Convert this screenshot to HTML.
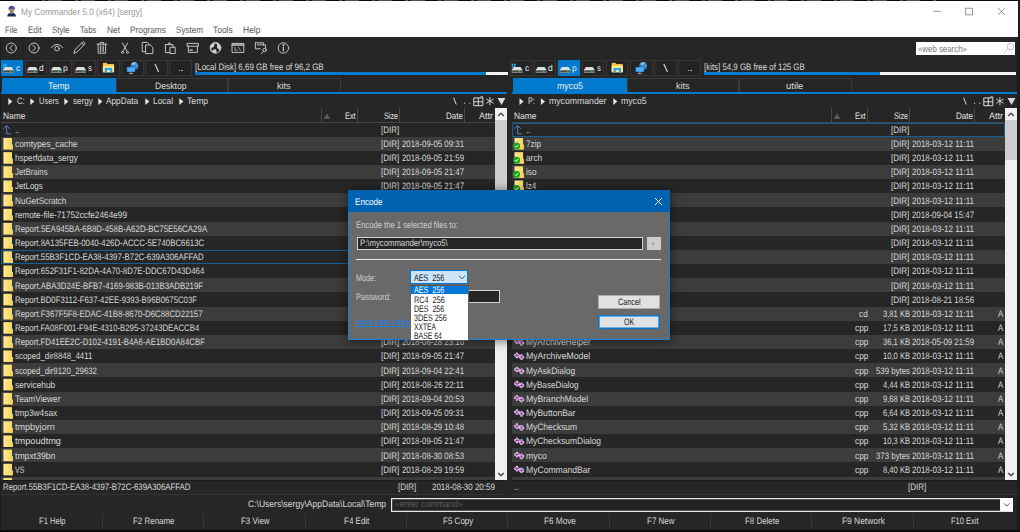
<!DOCTYPE html>
<html><head><meta charset="utf-8"><title>My Commander</title><style>
html,body{margin:0;padding:0}
body{width:1020px;height:532px;overflow:hidden;position:relative;background:#262626;font-family:"Liberation Sans",sans-serif;font-size:9.40px;color:#d8d8d8}
.a{position:absolute;display:block}
.t{position:absolute;white-space:pre;text-rendering:geometricPrecision;line-height:14px;display:block}
svg{overflow:visible}
</style></head><body>
<div class="a" style="left:0.00px;top:0.00px;width:1018.00px;height:36.80px;background:#ffffff;"></div>
<div class="a" style="left:0.00px;top:0.00px;width:1020.00px;height:1.30px;background:#0a0a0a;"></div>
<div class="a" style="left:42.00px;top:0.00px;width:896.00px;height:0.80px;background:repeating-linear-gradient(90deg,rgba(150,150,150,0.55) 0 3px,rgba(40,40,40,0.3) 3px 6px,rgba(150,150,150,0.5) 6px 20px,transparent 20px 33px);"></div>
<span class="t" style="top:5.30px;font-size:9.40px;color:#9a9a9a;left:21.00px;transform:scaleX(0.8836);transform-origin:0 50%;">My Commander 5.0 (x64) [sergy]</span>
<span class="t" style="top:23.00px;font-size:9.40px;color:#5a5a5a;left:5.30px;transform:scaleX(0.8187);transform-origin:0 50%;">File</span>
<span class="t" style="top:23.00px;font-size:9.40px;color:#5a5a5a;left:27.70px;transform:scaleX(0.8520);transform-origin:0 50%;">Edit</span>
<span class="t" style="top:23.00px;font-size:9.40px;color:#5a5a5a;left:52.00px;transform:scaleX(0.8374);transform-origin:0 50%;">Style</span>
<span class="t" style="top:23.00px;font-size:9.40px;color:#5a5a5a;left:80.00px;transform:scaleX(0.8209);transform-origin:0 50%;">Tabs</span>
<span class="t" style="top:23.00px;font-size:9.40px;color:#5a5a5a;left:106.70px;transform:scaleX(0.8887);transform-origin:0 50%;">Net</span>
<span class="t" style="top:23.00px;font-size:9.40px;color:#5a5a5a;left:129.70px;transform:scaleX(0.8836);transform-origin:0 50%;">Programs</span>
<span class="t" style="top:23.00px;font-size:9.40px;color:#5a5a5a;left:175.50px;transform:scaleX(0.8679);transform-origin:0 50%;">System</span>
<span class="t" style="top:23.00px;font-size:9.40px;color:#5a5a5a;left:213.00px;transform:scaleX(0.8977);transform-origin:0 50%;">Tools</span>
<span class="t" style="top:23.00px;font-size:9.40px;color:#5a5a5a;left:242.50px;transform:scaleX(0.9052);transform-origin:0 50%;">Help</span>
<svg class="a" style="left:6px;top:5px" width="10" height="12" viewBox="0 0 10 12"><g transform="translate(0.80 0.40)"><path d="M1.6 3.4Q2.4 0.2 5.4 0.4Q8 0.8 8.2 3.2L8 4.2L1.8 4.4Z" fill="#3d4f8f"/><ellipse cx="4.9" cy="5.4" rx="2.3" ry="2.2" fill="#a88258"/><path d="M0.4 11.2Q0.4 7.4 4.8 7.4Q9.2 7.4 9.2 11.2Z" fill="#1f2658"/><path d="M3 7.6L4.8 9.4L6.6 7.6Z" fill="#4a5a9a"/></g></svg>
<svg class="a" style="left:925px;top:2px" width="90" height="20" viewBox="0 0 90 20" fill="none" stroke="#8c8c8c" stroke-width="0.9"><g transform="translate(0.00 0.00)"><path d="M8.5 9.4H15.8"/><rect x="40.7" y="6.2" width="6.8" height="6.6"/><path d="M73.2 6.1L79.8 12.9M79.8 6.1L73.2 12.9"/></g></svg>
<div class="a" style="left:915.90px;top:41.80px;width:99.10px;height:12.90px;background:#ffffff;"></div>
<span class="t" style="top:41.90px;font-size:9.40px;color:#777;left:918.00px;transform:scaleX(0.8372);transform-origin:0 50%;">«web search»</span>
<svg class="a" style="left:1002px;top:42px" width="13" height="12" viewBox="0 0 13 12" fill="none" stroke="#c4c4c4" stroke-width="1"><g transform="translate(0.00 0.00)"><circle cx="8.4" cy="4.6" r="3.3"/><path d="M6 7L1.6 11.4"/></g></svg>
<svg class="a" style="left:0px;top:37px" width="300" height="23" viewBox="0 0 300 23" fill="none" stroke="#cacaca" stroke-width="0.95" stroke-linecap="round" stroke-linejoin="round"><g transform="translate(0.00 0.00)">
<circle cx="11.3" cy="11" r="5"/><path d="M12.5 8.2L9.8 11L12.5 13.8"/>
<circle cx="34" cy="11" r="5"/><path d="M32.9 8.2L35.6 11L32.9 13.8"/>
<path d="M51.3 10.6Q57 3.8 62.7 10.6"/><circle cx="57" cy="11.6" r="2.3"/>
<path d="M74 16L75 12.6L82.6 5.2Q83.6 4.4 84.6 5.4Q85.4 6.4 84.5 7.3L77.2 14.8Z"/><path d="M81.8 6L83.8 8"/>
<path d="M97 7.2H106.8M98.2 7.2V16.2H105.6V7.2M100.2 7.2V5.4H103.6V7.2"/><path d="M100.6 9V14.6M103.2 9V14.6" stroke="#b9a4c4" stroke-width="1.4"/>
<path d="M122.4 6L127.2 14.4M127.6 6L122.8 14.4"/><circle cx="122.5" cy="15.4" r="1.05"/><circle cx="127.5" cy="15.4" r="1.05"/>
<path d="M142.6 5.4H147.4L149.6 7.6V14.6H142.6Z"/><path d="M146 8H150.4L152.8 10.4V16.6H146Z" fill="#252526"/>
<path d="M165.4 7.6H173V10M165.4 7.6V15.6H170M168 7.4L169.4 5.4L170.8 7.4"/><path d="M170.4 10.2H175.2V16.6H170.4Z"/>
<path d="M187.4 6.4H198.4V9.2H187.4ZM188.4 9.2V15.4H197.4V9.2"/><path d="M190 13.2H192.4" stroke-width="1.3"/>
<circle cx="215.5" cy="10.8" r="5.4" fill="#d2d2d2" stroke-width="0.9"/><path d="M214.6 6.6Q216.8 6.4 217.2 8Q216.6 9.6 217.2 11.2Q219.4 11.6 219.4 13.4Q218.6 15.2 216.4 15.6Q217 13.4 215.6 12.2Q212.8 12 212.4 14Q211 13 211.4 11Q213.6 10.6 214.2 9Z" fill="#262626" stroke="none"/>
<rect x="232.4" y="6.4" width="11.4" height="9" /><path d="M232.4 8H243.8" stroke-width="1.3"/><path d="M235 10.4V13.2H237M238.6 10.4L240.4 13.2" stroke-width="0.8"/>
<path d="M255.4 5.8H263.6V8.2M255.4 5.8V11.8H260.4M257.4 7.8H265.6V12"/><circle cx="264.6" cy="13" r="1.7"/><path d="M263.4 14.4L261.2 16.8"/>
<circle cx="283.4" cy="11" r="5.2"/><path d="M283.4 10.2V14" stroke-width="1.2"/><circle cx="283.4" cy="8" r="0.6" fill="#cacaca"/>
</g></svg>
<div class="a" style="left:1.00px;top:60.00px;width:22.40px;height:15.70px;background:#007acc;"></div>
<svg class="a" style="left:2px;top:63px" width="12" height="11" viewBox="0 0 12 11"><g transform="translate(0.90 0.10)"><path d="M0 0.7H1.6V2.3H0ZM2.3 0.7H3.9V2.3H2.3ZM0 2.7H1.6V4.3H0ZM2.3 2.7H3.9V4.3H2.3Z" fill="#22b0ff"/><path d="M2 3.8H8.8L10.8 7H0Z" fill="#dedede"/><rect x="0" y="7" width="10.8" height="3" rx="0.6" fill="#8c8c8c"/><rect x="0.6" y="7.6" width="9.6" height="1.5" fill="#474747"/><rect x="7.2" y="7.5" width="1.5" height="1.6" fill="#30c030"/></g></svg>
<span class="t" style="top:60.90px;font-size:8.70px;color:#ececec;left:15.90px;transform:scaleX(0.9655);transform-origin:0 50%;">c</span>
<div class="a" style="left:25.07px;top:60.00px;width:22.40px;height:15.70px;background:#232324;box-shadow:inset 0 0 0 1px #353535;"></div>
<svg class="a" style="left:26px;top:63px" width="12" height="11" viewBox="0 0 12 11"><g transform="translate(0.97 0.10)"><path d="M2 3.8H8.8L10.8 7H0Z" fill="#dedede"/><rect x="0" y="7" width="10.8" height="3" rx="0.6" fill="#8c8c8c"/><rect x="0.6" y="7.6" width="9.6" height="1.5" fill="#474747"/><rect x="7.2" y="7.5" width="1.5" height="1.6" fill="#30c030"/></g></svg>
<span class="t" style="top:60.90px;font-size:8.70px;color:#ececec;left:38.97px;transform:scaleX(0.9714);transform-origin:0 50%;">d</span>
<div class="a" style="left:49.14px;top:60.00px;width:22.40px;height:15.70px;background:#232324;box-shadow:inset 0 0 0 1px #353535;"></div>
<svg class="a" style="left:51px;top:63px" width="12" height="11" viewBox="0 0 12 11"><g transform="translate(0.04 0.10)"><path d="M2 3.8H8.8L10.8 7H0Z" fill="#dedede"/><rect x="0" y="7" width="10.8" height="3" rx="0.6" fill="#8c8c8c"/><rect x="0.6" y="7.6" width="9.6" height="1.5" fill="#474747"/><rect x="7.2" y="7.5" width="1.5" height="1.6" fill="#30c030"/></g></svg>
<span class="t" style="top:60.90px;font-size:8.70px;color:#ececec;left:63.34px;transform:scaleX(0.9714);transform-origin:0 50%;">p</span>
<div class="a" style="left:73.21px;top:60.00px;width:22.40px;height:15.70px;background:#232324;box-shadow:inset 0 0 0 1px #353535;"></div>
<svg class="a" style="left:75px;top:63px" width="12" height="11" viewBox="0 0 12 11"><g transform="translate(0.11 0.10)"><path d="M2 3.8H8.8L10.8 7H0Z" fill="#dedede"/><rect x="0" y="7" width="10.8" height="3" rx="0.6" fill="#8c8c8c"/><rect x="0.6" y="7.6" width="9.6" height="1.5" fill="#474747"/><rect x="7.2" y="7.5" width="1.5" height="1.6" fill="#30c030"/></g></svg>
<span class="t" style="top:60.90px;font-size:8.70px;color:#ececec;left:87.71px;transform:scaleX(0.8966);transform-origin:0 50%;">s</span>
<div class="a" style="left:97.28px;top:60.00px;width:22.40px;height:15.70px;background:#232324;box-shadow:inset 0 0 0 1px #353535;"></div>
<div class="a" style="left:121.35px;top:60.00px;width:22.40px;height:15.70px;background:#232324;box-shadow:inset 0 0 0 1px #353535;"></div>
<div class="a" style="left:145.42px;top:60.00px;width:22.40px;height:15.70px;background:#232324;box-shadow:inset 0 0 0 1px #353535;"></div>
<div class="a" style="left:169.49px;top:60.00px;width:22.40px;height:15.70px;background:#232324;box-shadow:inset 0 0 0 1px #353535;"></div>
<svg class="a" style="left:102px;top:62px" width="13" height="11" viewBox="0 0 13 11"><g transform="translate(0.48 0.60)"><path d="M0.4 1Q0.4 0.2 1.2 0.2H4L5.2 1.5H10.8Q11.6 1.5 11.6 2.3V9.6H0.4Z" fill="#f1c040"/><path d="M0.4 2.9H11.6V9.7H0.4Z" fill="#ffe48a"/><path d="M2.3 10.4V5.4H9.7V10.4H7.7V7.4H4.5V10.4Z" fill="#27a3f3"/></g></svg>
<svg class="a" style="left:125px;top:61px" width="13" height="13" viewBox="0 0 13 13"><g transform="translate(0.95 0.60)"><circle cx="8.5" cy="4.2" r="3.9" fill="#2f82c4"/><path d="M5.6 2.4Q7.6 -0.2 10.6 1Q8.6 1.8 8.2 3.6Q6.8 3.4 5.6 2.4Z" fill="#a9d0ee"/><path d="M9.6 3.2Q11.4 2.8 12 4.4Q11 5 9.8 4.6Z" fill="#6fb0e2"/><rect x="0.9" y="5.5" width="8.3" height="4.9" fill="#2f90e4"/><rect x="1.6" y="6.1" width="6.9" height="3.5" fill="#56aef2"/><path d="M5 10.4V11.8M3 12H7" stroke="#a8b4bc" stroke-width="0.9"/></g></svg>
<svg class="a" style="left:154px;top:63px" width="6" height="9" viewBox="0 0 6 9"><g transform="translate(0.02 0.60)"><path d="M1 0.4L4.6 8.4" stroke="#e0e0e0" stroke-width="1.1"/></g></svg>
<div class="a" style="left:178.99px;top:69.70px;width:1.50px;height:1.10px;background:#b4b4b4;"></div>
<div class="a" style="left:181.49px;top:69.70px;width:1.50px;height:1.10px;background:#b4b4b4;"></div>
<span class="t" style="top:59.80px;font-size:9.40px;left:195.00px;transform:scaleX(0.8484);transform-origin:0 50%;">[Local Disk] 6,69 GB free of 96,2 GB</span>
<div class="a" style="left:195.00px;top:71.90px;width:290.50px;height:2.90px;background:#007acc;"></div>
<div class="a" style="left:485.50px;top:71.90px;width:22.10px;height:2.90px;background:#f2f2f2;"></div>
<div class="a" style="left:509.80px;top:60.00px;width:22.40px;height:15.70px;background:#232324;box-shadow:inset 0 0 0 1px #353535;"></div>
<svg class="a" style="left:511px;top:63px" width="12" height="11" viewBox="0 0 12 11"><g transform="translate(0.70 0.10)"><path d="M0 0.7H1.6V2.3H0ZM2.3 0.7H3.9V2.3H2.3ZM0 2.7H1.6V4.3H0ZM2.3 2.7H3.9V4.3H2.3Z" fill="#22b0ff"/><path d="M2 3.8H8.8L10.8 7H0Z" fill="#dedede"/><rect x="0" y="7" width="10.8" height="3" rx="0.6" fill="#8c8c8c"/><rect x="0.6" y="7.6" width="9.6" height="1.5" fill="#474747"/><rect x="7.2" y="7.5" width="1.5" height="1.6" fill="#30c030"/></g></svg>
<span class="t" style="top:60.90px;font-size:8.70px;color:#ececec;left:524.70px;transform:scaleX(0.9655);transform-origin:0 50%;">c</span>
<div class="a" style="left:533.87px;top:60.00px;width:22.40px;height:15.70px;background:#232324;box-shadow:inset 0 0 0 1px #353535;"></div>
<svg class="a" style="left:535px;top:63px" width="12" height="11" viewBox="0 0 12 11"><g transform="translate(0.77 0.10)"><path d="M2 3.8H8.8L10.8 7H0Z" fill="#dedede"/><rect x="0" y="7" width="10.8" height="3" rx="0.6" fill="#8c8c8c"/><rect x="0.6" y="7.6" width="9.6" height="1.5" fill="#474747"/><rect x="7.2" y="7.5" width="1.5" height="1.6" fill="#30c030"/></g></svg>
<span class="t" style="top:60.90px;font-size:8.70px;color:#ececec;left:547.77px;transform:scaleX(0.9714);transform-origin:0 50%;">d</span>
<div class="a" style="left:557.94px;top:60.00px;width:22.40px;height:15.70px;background:#007acc;"></div>
<svg class="a" style="left:559px;top:63px" width="12" height="11" viewBox="0 0 12 11"><g transform="translate(0.84 0.10)"><path d="M2 3.8H8.8L10.8 7H0Z" fill="#dedede"/><rect x="0" y="7" width="10.8" height="3" rx="0.6" fill="#8c8c8c"/><rect x="0.6" y="7.6" width="9.6" height="1.5" fill="#474747"/><rect x="7.2" y="7.5" width="1.5" height="1.6" fill="#30c030"/></g></svg>
<span class="t" style="top:60.90px;font-size:8.70px;color:#ececec;left:572.14px;transform:scaleX(0.9714);transform-origin:0 50%;">p</span>
<div class="a" style="left:582.01px;top:60.00px;width:22.40px;height:15.70px;background:#232324;box-shadow:inset 0 0 0 1px #353535;"></div>
<svg class="a" style="left:583px;top:63px" width="12" height="11" viewBox="0 0 12 11"><g transform="translate(0.91 0.10)"><path d="M2 3.8H8.8L10.8 7H0Z" fill="#dedede"/><rect x="0" y="7" width="10.8" height="3" rx="0.6" fill="#8c8c8c"/><rect x="0.6" y="7.6" width="9.6" height="1.5" fill="#474747"/><rect x="7.2" y="7.5" width="1.5" height="1.6" fill="#30c030"/></g></svg>
<span class="t" style="top:60.90px;font-size:8.70px;color:#ececec;left:596.51px;transform:scaleX(0.8966);transform-origin:0 50%;">s</span>
<div class="a" style="left:606.08px;top:60.00px;width:22.40px;height:15.70px;background:#232324;box-shadow:inset 0 0 0 1px #353535;"></div>
<div class="a" style="left:630.15px;top:60.00px;width:22.40px;height:15.70px;background:#232324;box-shadow:inset 0 0 0 1px #353535;"></div>
<div class="a" style="left:654.22px;top:60.00px;width:22.40px;height:15.70px;background:#232324;box-shadow:inset 0 0 0 1px #353535;"></div>
<div class="a" style="left:678.29px;top:60.00px;width:22.40px;height:15.70px;background:#232324;box-shadow:inset 0 0 0 1px #353535;"></div>
<svg class="a" style="left:611px;top:62px" width="13" height="11" viewBox="0 0 13 11"><g transform="translate(0.28 0.60)"><path d="M0.4 1Q0.4 0.2 1.2 0.2H4L5.2 1.5H10.8Q11.6 1.5 11.6 2.3V9.6H0.4Z" fill="#f1c040"/><path d="M0.4 2.9H11.6V9.7H0.4Z" fill="#ffe48a"/><path d="M2.3 10.4V5.4H9.7V10.4H7.7V7.4H4.5V10.4Z" fill="#27a3f3"/></g></svg>
<svg class="a" style="left:634px;top:61px" width="13" height="13" viewBox="0 0 13 13"><g transform="translate(0.75 0.60)"><circle cx="8.5" cy="4.2" r="3.9" fill="#2f82c4"/><path d="M5.6 2.4Q7.6 -0.2 10.6 1Q8.6 1.8 8.2 3.6Q6.8 3.4 5.6 2.4Z" fill="#a9d0ee"/><path d="M9.6 3.2Q11.4 2.8 12 4.4Q11 5 9.8 4.6Z" fill="#6fb0e2"/><rect x="0.9" y="5.5" width="8.3" height="4.9" fill="#2f90e4"/><rect x="1.6" y="6.1" width="6.9" height="3.5" fill="#56aef2"/><path d="M5 10.4V11.8M3 12H7" stroke="#a8b4bc" stroke-width="0.9"/></g></svg>
<svg class="a" style="left:662px;top:63px" width="6" height="9" viewBox="0 0 6 9"><g transform="translate(0.82 0.60)"><path d="M1 0.4L4.6 8.4" stroke="#e0e0e0" stroke-width="1.1"/></g></svg>
<div class="a" style="left:687.79px;top:69.70px;width:1.50px;height:1.10px;background:#b4b4b4;"></div>
<div class="a" style="left:690.29px;top:69.70px;width:1.50px;height:1.10px;background:#b4b4b4;"></div>
<span class="t" style="top:59.80px;font-size:9.40px;left:703.80px;transform:scaleX(0.8405);transform-origin:0 50%;">[kits] 54,9 GB free of 125 GB</span>
<div class="a" style="left:703.80px;top:71.90px;width:176.20px;height:2.90px;background:#007acc;"></div>
<div class="a" style="left:880.00px;top:71.90px;width:136.40px;height:2.90px;background:#f2f2f2;"></div>
<div class="a" style="left:1.90px;top:78.30px;width:113.70px;height:15.00px;background:#007acc;"></div>
<span class="t" style="top:79.00px;font-size:9.40px;color:#f0f0f0;left:48.25px;transform:scaleX(0.9353);transform-origin:0 50%;">Temp</span>
<div class="a" style="left:115.60px;top:78.30px;width:112.40px;height:14.60px;background:#252526;box-shadow:inset 0 0 0 1px #3a3a3a;"></div>
<span class="t" style="top:79.00px;font-size:9.40px;color:#dcdcdc;left:155.45px;transform:scaleX(0.9135);transform-origin:0 50%;">Desktop</span>
<div class="a" style="left:228.00px;top:78.30px;width:112.50px;height:14.60px;background:#252526;box-shadow:inset 0 0 0 1px #3a3a3a;"></div>
<span class="t" style="top:79.00px;font-size:9.40px;color:#dcdcdc;left:277.40px;transform:scaleX(0.9645);transform-origin:0 50%;">kits</span>
<div class="a" style="left:1.00px;top:92.40px;width:506.00px;height:1.80px;background:#007acc;"></div>
<svg class="a" style="left:8px;top:97px" width="5" height="8" viewBox="0 0 5 8"><g transform="translate(0.00 0.60)"><path d="M0.3 0.6L4.4 4L0.3 7.4Z" fill="#e6e6e6"/></g></svg>
<span class="t" style="top:94.40px;font-size:9.40px;color:#dcdcdc;left:16.50px;transform:scaleX(0.8191);transform-origin:0 50%;">C:</span>
<svg class="a" style="left:30px;top:97px" width="5" height="8" viewBox="0 0 5 8"><g transform="translate(0.00 0.60)"><path d="M0.3 0.6L4.4 4L0.3 7.4Z" fill="#e6e6e6"/></g></svg>
<span class="t" style="top:94.40px;font-size:9.40px;color:#dcdcdc;left:38.50px;transform:scaleX(0.8026);transform-origin:0 50%;">Users</span>
<svg class="a" style="left:64px;top:97px" width="5" height="8" viewBox="0 0 5 8"><g transform="translate(0.00 0.60)"><path d="M0.3 0.6L4.4 4L0.3 7.4Z" fill="#e6e6e6"/></g></svg>
<span class="t" style="top:94.40px;font-size:9.40px;color:#dcdcdc;left:72.80px;transform:scaleX(0.8614);transform-origin:0 50%;">sergy</span>
<svg class="a" style="left:98px;top:97px" width="5" height="8" viewBox="0 0 5 8"><g transform="translate(0.00 0.60)"><path d="M0.3 0.6L4.4 4L0.3 7.4Z" fill="#e6e6e6"/></g></svg>
<span class="t" style="top:94.40px;font-size:9.40px;color:#dcdcdc;left:106.40px;transform:scaleX(0.8802);transform-origin:0 50%;">AppData</span>
<svg class="a" style="left:145px;top:97px" width="5" height="8" viewBox="0 0 5 8"><g transform="translate(0.00 0.60)"><path d="M0.3 0.6L4.4 4L0.3 7.4Z" fill="#e6e6e6"/></g></svg>
<span class="t" style="top:94.40px;font-size:9.40px;color:#dcdcdc;left:153.00px;transform:scaleX(0.8989);transform-origin:0 50%;">Local</span>
<svg class="a" style="left:179px;top:97px" width="5" height="8" viewBox="0 0 5 8"><g transform="translate(0.00 0.60)"><path d="M0.3 0.6L4.4 4L0.3 7.4Z" fill="#e6e6e6"/></g></svg>
<span class="t" style="top:94.40px;font-size:9.40px;color:#dcdcdc;left:187.40px;transform:scaleX(0.9223);transform-origin:0 50%;">Temp</span>
<svg class="a" style="left:450px;top:94px" width="56" height="13" viewBox="0 0 56 13" fill="none" stroke="#dcdcdc" stroke-width="1"><g transform="translate(0.40 0.90)"><path d="M3.2 2.8L5.9 9.6"/><path d="M13.6 8.4H14.7M18.9 8.4H20" stroke-width="1.1"/><path d="M23.4 3H32.4V10.8H23.4ZM27.9 3V10.8M23.4 6.9H32.4"/><path d="M29.6 2.9L31.3 1.1L33 2.9" stroke-width="0.8"/><path d="M39.5 2.2V10.4M35.9 4.2L43.1 8.4M43.1 4.2L35.9 8.4" stroke-width="0.9"/><path d="M47.2 3H55L51.1 10Z" fill="#dcdcdc" stroke="none"/></g></svg>
<span class="t" style="top:108.70px;font-size:9.40px;color:#e2e2e2;left:3.00px;transform:scaleX(0.8933);transform-origin:0 50%;">Name</span>
<div class="a" style="left:321.00px;top:108.30px;width:1.00px;height:13.40px;background:#474747;"></div>
<div class="a" style="left:357.00px;top:108.30px;width:1.00px;height:13.40px;background:#474747;"></div>
<div class="a" style="left:399.00px;top:108.30px;width:1.00px;height:13.40px;background:#474747;"></div>
<div class="a" style="left:464.10px;top:108.30px;width:1.00px;height:13.40px;background:#474747;"></div>
<svg class="a" style="left:323px;top:113px" width="7" height="6" viewBox="0 0 7 6"><g transform="translate(0.80 0.00)"><path d="M0.2 5.2L3.1 0.2L6 5.2Z" fill="#585858"/><path d="M0.1 5.2H6.1" stroke="#6e6e6e" stroke-width="0.8"/></g></svg>
<span class="t" style="top:108.70px;font-size:9.40px;color:#e2e2e2;left:345.40px;transform:scaleX(0.7805);transform-origin:0 50%;">Ext</span>
<span class="t" style="top:108.70px;font-size:9.40px;color:#e2e2e2;left:383.70px;transform:scaleX(0.7765);transform-origin:0 50%;">Size</span>
<span class="t" style="top:108.70px;font-size:9.40px;color:#e2e2e2;left:446.00px;transform:scaleX(0.8562);transform-origin:0 50%;">Date</span>
<span class="t" style="top:108.70px;font-size:9.40px;color:#e2e2e2;left:478.70px;transform:scaleX(0.9574);transform-origin:0 50%;">Attr</span>
<div class="a" style="left:1.00px;top:121.70px;width:494.00px;height:0.90px;background:#454545;"></div>
<svg class="a" style="left:3px;top:125px" width="9" height="10" viewBox="0 0 9 10" fill="none" stroke="#5f7cc8" stroke-width="1"><g transform="translate(0.10 0.20)"><path d="M0.3 3.6L3.5 0.5L6.8 3.6M3.5 0.7V8.6H7.8"/></g></svg>
<span class="t" style="top:122.78px;font-size:9.40px;left:14.70px;transform:scaleX(0.8858);transform-origin:0 50%;">..</span>
<span class="t" style="top:122.78px;font-size:9.40px;left:381.40px;transform:scaleX(0.8593);transform-origin:0 50%;">[DIR]</span>
<div class="a" style="left:1.00px;top:136.66px;width:494.00px;height:14.16px;background:#3c3c3c;"></div>
<svg class="a" style="left:2px;top:137px" width="12" height="14" viewBox="0 0 12 14" ><g transform="translate(0.50 0.97)"><defs><linearGradient id="fg" x1="0" x2="1" y1="0" y2="0"><stop offset="0" stop-color="#ffea98"/><stop offset="1" stop-color="#f8d560"/></linearGradient></defs><path d="M0.9 0H9.5V11.6H0.9Z" fill="url(#fg)"/><path d="M9.5 6.6H10.5V11.6H9.5Z" fill="#f3cd55"/><path d="M7.6 7.4H9.5V11.6H7.6Z" fill="#f6d25c"/></g></svg>
<span class="t" style="top:136.95px;font-size:9.40px;left:14.70px;transform:scaleX(0.8875);transform-origin:0 50%;">comtypes_cache</span>
<span class="t" style="top:136.95px;font-size:9.40px;left:381.40px;transform:scaleX(0.8593);transform-origin:0 50%;">[DIR]</span>
<span class="t" style="top:136.95px;font-size:9.40px;left:401.70px;transform:scaleX(0.8381);transform-origin:0 50%;">2018-09-05 09:31</span>
<svg class="a" style="left:2px;top:152px" width="12" height="14" viewBox="0 0 12 14" ><g transform="translate(0.50 0.13)"><defs><linearGradient id="fg" x1="0" x2="1" y1="0" y2="0"><stop offset="0" stop-color="#ffea98"/><stop offset="1" stop-color="#f8d560"/></linearGradient></defs><path d="M0.9 0H9.5V11.6H0.9Z" fill="url(#fg)"/><path d="M9.5 6.6H10.5V11.6H9.5Z" fill="#f3cd55"/><path d="M7.6 7.4H9.5V11.6H7.6Z" fill="#f6d25c"/></g></svg>
<span class="t" style="top:151.11px;font-size:9.40px;left:14.70px;transform:scaleX(0.8674);transform-origin:0 50%;">hsperfdata_sergy</span>
<span class="t" style="top:151.11px;font-size:9.40px;left:381.40px;transform:scaleX(0.8593);transform-origin:0 50%;">[DIR]</span>
<span class="t" style="top:151.11px;font-size:9.40px;left:401.70px;transform:scaleX(0.8381);transform-origin:0 50%;">2018-09-05 21:59</span>
<div class="a" style="left:1.00px;top:165.00px;width:494.00px;height:14.16px;background:#3c3c3c;"></div>
<svg class="a" style="left:2px;top:166px" width="12" height="14" viewBox="0 0 12 14" ><g transform="translate(0.50 0.30)"><defs><linearGradient id="fg" x1="0" x2="1" y1="0" y2="0"><stop offset="0" stop-color="#ffea98"/><stop offset="1" stop-color="#f8d560"/></linearGradient></defs><path d="M0.9 0H9.5V11.6H0.9Z" fill="url(#fg)"/><path d="M9.5 6.6H10.5V11.6H9.5Z" fill="#f3cd55"/><path d="M7.6 7.4H9.5V11.6H7.6Z" fill="#f6d25c"/></g></svg>
<span class="t" style="top:165.28px;font-size:9.40px;left:14.70px;transform:scaleX(0.8345);transform-origin:0 50%;">JetBrains</span>
<span class="t" style="top:165.28px;font-size:9.40px;left:381.40px;transform:scaleX(0.8593);transform-origin:0 50%;">[DIR]</span>
<span class="t" style="top:165.28px;font-size:9.40px;left:401.70px;transform:scaleX(0.8381);transform-origin:0 50%;">2018-09-05 21:47</span>
<svg class="a" style="left:2px;top:180px" width="12" height="14" viewBox="0 0 12 14" ><g transform="translate(0.50 0.46)"><defs><linearGradient id="fg" x1="0" x2="1" y1="0" y2="0"><stop offset="0" stop-color="#ffea98"/><stop offset="1" stop-color="#f8d560"/></linearGradient></defs><path d="M0.9 0H9.5V11.6H0.9Z" fill="url(#fg)"/><path d="M9.5 6.6H10.5V11.6H9.5Z" fill="#f3cd55"/><path d="M7.6 7.4H9.5V11.6H7.6Z" fill="#f6d25c"/></g></svg>
<span class="t" style="top:179.44px;font-size:9.40px;left:14.70px;transform:scaleX(0.8444);transform-origin:0 50%;">JetLogs</span>
<span class="t" style="top:179.44px;font-size:9.40px;left:381.40px;transform:scaleX(0.8593);transform-origin:0 50%;">[DIR]</span>
<span class="t" style="top:179.44px;font-size:9.40px;left:401.70px;transform:scaleX(0.8381);transform-origin:0 50%;">2018-09-05 21:47</span>
<div class="a" style="left:1.00px;top:193.32px;width:494.00px;height:14.16px;background:#3c3c3c;"></div>
<svg class="a" style="left:2px;top:194px" width="12" height="14" viewBox="0 0 12 14" ><g transform="translate(0.50 0.62)"><defs><linearGradient id="fg" x1="0" x2="1" y1="0" y2="0"><stop offset="0" stop-color="#ffea98"/><stop offset="1" stop-color="#f8d560"/></linearGradient></defs><path d="M0.9 0H9.5V11.6H0.9Z" fill="url(#fg)"/><path d="M9.5 6.6H10.5V11.6H9.5Z" fill="#f3cd55"/><path d="M7.6 7.4H9.5V11.6H7.6Z" fill="#f6d25c"/></g></svg>
<span class="t" style="top:193.61px;font-size:9.40px;left:14.70px;transform:scaleX(0.8724);transform-origin:0 50%;">NuGetScratch</span>
<span class="t" style="top:193.61px;font-size:9.40px;left:381.40px;transform:scaleX(0.8593);transform-origin:0 50%;">[DIR]</span>
<span class="t" style="top:193.61px;font-size:9.40px;left:401.70px;transform:scaleX(0.8381);transform-origin:0 50%;">2018-09-05 21:47</span>
<svg class="a" style="left:2px;top:208px" width="12" height="14" viewBox="0 0 12 14" ><g transform="translate(0.50 0.79)"><defs><linearGradient id="fg" x1="0" x2="1" y1="0" y2="0"><stop offset="0" stop-color="#ffea98"/><stop offset="1" stop-color="#f8d560"/></linearGradient></defs><path d="M0.9 0H9.5V11.6H0.9Z" fill="url(#fg)"/><path d="M9.5 6.6H10.5V11.6H9.5Z" fill="#f3cd55"/><path d="M7.6 7.4H9.5V11.6H7.6Z" fill="#f6d25c"/></g></svg>
<span class="t" style="top:207.77px;font-size:9.40px;left:14.70px;transform:scaleX(0.8807);transform-origin:0 50%;">remote-file-71752ccfe2464e99</span>
<span class="t" style="top:207.77px;font-size:9.40px;left:381.40px;transform:scaleX(0.8593);transform-origin:0 50%;">[DIR]</span>
<span class="t" style="top:207.77px;font-size:9.40px;left:401.70px;transform:scaleX(0.8381);transform-origin:0 50%;">2018-09-05 09:31</span>
<div class="a" style="left:1.00px;top:221.66px;width:494.00px;height:14.16px;background:#3c3c3c;"></div>
<svg class="a" style="left:2px;top:222px" width="12" height="14" viewBox="0 0 12 14" ><g transform="translate(0.50 0.96)"><defs><linearGradient id="fg" x1="0" x2="1" y1="0" y2="0"><stop offset="0" stop-color="#ffea98"/><stop offset="1" stop-color="#f8d560"/></linearGradient></defs><path d="M0.9 0H9.5V11.6H0.9Z" fill="url(#fg)"/><path d="M9.5 6.6H10.5V11.6H9.5Z" fill="#f3cd55"/><path d="M7.6 7.4H9.5V11.6H7.6Z" fill="#f6d25c"/></g></svg>
<span class="t" style="top:221.94px;font-size:9.40px;left:14.70px;transform:scaleX(0.8439);transform-origin:0 50%;">Report.5EA945BA-6B8D-458B-A62D-BC75E56CA29A</span>
<span class="t" style="top:221.94px;font-size:9.40px;left:381.40px;transform:scaleX(0.8593);transform-origin:0 50%;">[DIR]</span>
<span class="t" style="top:221.94px;font-size:9.40px;left:401.70px;transform:scaleX(0.8381);transform-origin:0 50%;">2018-08-30 20:59</span>
<svg class="a" style="left:2px;top:237px" width="12" height="14" viewBox="0 0 12 14" ><g transform="translate(0.50 0.12)"><defs><linearGradient id="fg" x1="0" x2="1" y1="0" y2="0"><stop offset="0" stop-color="#ffea98"/><stop offset="1" stop-color="#f8d560"/></linearGradient></defs><path d="M0.9 0H9.5V11.6H0.9Z" fill="url(#fg)"/><path d="M9.5 6.6H10.5V11.6H9.5Z" fill="#f3cd55"/><path d="M7.6 7.4H9.5V11.6H7.6Z" fill="#f6d25c"/></g></svg>
<span class="t" style="top:236.10px;font-size:9.40px;left:14.70px;transform:scaleX(0.8365);transform-origin:0 50%;">Report.8A135FEB-0040-426D-ACCC-5E740BC6613C</span>
<span class="t" style="top:236.10px;font-size:9.40px;left:381.40px;transform:scaleX(0.8593);transform-origin:0 50%;">[DIR]</span>
<span class="t" style="top:236.10px;font-size:9.40px;left:401.70px;transform:scaleX(0.8381);transform-origin:0 50%;">2018-08-30 20:59</span>
<svg class="a" style="left:2px;top:251px" width="12" height="14" viewBox="0 0 12 14" ><g transform="translate(0.50 0.28)"><defs><linearGradient id="fg" x1="0" x2="1" y1="0" y2="0"><stop offset="0" stop-color="#ffea98"/><stop offset="1" stop-color="#f8d560"/></linearGradient></defs><path d="M0.9 0H9.5V11.6H0.9Z" fill="url(#fg)"/><path d="M9.5 6.6H10.5V11.6H9.5Z" fill="#f3cd55"/><path d="M7.6 7.4H9.5V11.6H7.6Z" fill="#f6d25c"/></g></svg>
<span class="t" style="top:250.27px;font-size:9.40px;left:14.70px;transform:scaleX(0.8406);transform-origin:0 50%;">Report.55B3F1CD-EA38-4397-B72C-639A306AFFAD</span>
<span class="t" style="top:250.27px;font-size:9.40px;left:381.40px;transform:scaleX(0.8593);transform-origin:0 50%;">[DIR]</span>
<span class="t" style="top:250.27px;font-size:9.40px;left:401.70px;transform:scaleX(0.8381);transform-origin:0 50%;">2018-08-30 20:59</span>
<svg class="a" style="left:2px;top:265px" width="12" height="14" viewBox="0 0 12 14" ><g transform="translate(0.50 0.45)"><defs><linearGradient id="fg" x1="0" x2="1" y1="0" y2="0"><stop offset="0" stop-color="#ffea98"/><stop offset="1" stop-color="#f8d560"/></linearGradient></defs><path d="M0.9 0H9.5V11.6H0.9Z" fill="url(#fg)"/><path d="M9.5 6.6H10.5V11.6H9.5Z" fill="#f3cd55"/><path d="M7.6 7.4H9.5V11.6H7.6Z" fill="#f6d25c"/></g></svg>
<span class="t" style="top:264.43px;font-size:9.40px;left:14.70px;transform:scaleX(0.8413);transform-origin:0 50%;">Report.652F31F1-82DA-4A70-8D7E-DDC67D43D464</span>
<span class="t" style="top:264.43px;font-size:9.40px;left:381.40px;transform:scaleX(0.8593);transform-origin:0 50%;">[DIR]</span>
<span class="t" style="top:264.43px;font-size:9.40px;left:401.70px;transform:scaleX(0.8381);transform-origin:0 50%;">2018-08-30 20:59</span>
<div class="a" style="left:1.00px;top:278.31px;width:494.00px;height:14.16px;background:#3c3c3c;"></div>
<svg class="a" style="left:2px;top:279px" width="12" height="14" viewBox="0 0 12 14" ><g transform="translate(0.50 0.62)"><defs><linearGradient id="fg" x1="0" x2="1" y1="0" y2="0"><stop offset="0" stop-color="#ffea98"/><stop offset="1" stop-color="#f8d560"/></linearGradient></defs><path d="M0.9 0H9.5V11.6H0.9Z" fill="url(#fg)"/><path d="M9.5 6.6H10.5V11.6H9.5Z" fill="#f3cd55"/><path d="M7.6 7.4H9.5V11.6H7.6Z" fill="#f6d25c"/></g></svg>
<span class="t" style="top:278.60px;font-size:9.40px;left:14.70px;transform:scaleX(0.8375);transform-origin:0 50%;">Report.ABA3D24E-BFB7-4169-983B-013B3ADB219F</span>
<span class="t" style="top:278.60px;font-size:9.40px;left:381.40px;transform:scaleX(0.8593);transform-origin:0 50%;">[DIR]</span>
<span class="t" style="top:278.60px;font-size:9.40px;left:401.70px;transform:scaleX(0.8381);transform-origin:0 50%;">2018-08-30 20:59</span>
<svg class="a" style="left:2px;top:293px" width="12" height="14" viewBox="0 0 12 14" ><g transform="translate(0.50 0.78)"><defs><linearGradient id="fg" x1="0" x2="1" y1="0" y2="0"><stop offset="0" stop-color="#ffea98"/><stop offset="1" stop-color="#f8d560"/></linearGradient></defs><path d="M0.9 0H9.5V11.6H0.9Z" fill="url(#fg)"/><path d="M9.5 6.6H10.5V11.6H9.5Z" fill="#f3cd55"/><path d="M7.6 7.4H9.5V11.6H7.6Z" fill="#f6d25c"/></g></svg>
<span class="t" style="top:292.76px;font-size:9.40px;left:14.70px;transform:scaleX(0.8302);transform-origin:0 50%;">Report.BD0F3112-F637-42EE-9393-B96B0675C03F</span>
<span class="t" style="top:292.76px;font-size:9.40px;left:381.40px;transform:scaleX(0.8593);transform-origin:0 50%;">[DIR]</span>
<span class="t" style="top:292.76px;font-size:9.40px;left:401.70px;transform:scaleX(0.8381);transform-origin:0 50%;">2018-08-30 20:59</span>
<div class="a" style="left:1.00px;top:306.64px;width:494.00px;height:14.16px;background:#3c3c3c;"></div>
<svg class="a" style="left:2px;top:307px" width="12" height="14" viewBox="0 0 12 14" ><g transform="translate(0.50 0.94)"><defs><linearGradient id="fg" x1="0" x2="1" y1="0" y2="0"><stop offset="0" stop-color="#ffea98"/><stop offset="1" stop-color="#f8d560"/></linearGradient></defs><path d="M0.9 0H9.5V11.6H0.9Z" fill="url(#fg)"/><path d="M9.5 6.6H10.5V11.6H9.5Z" fill="#f3cd55"/><path d="M7.6 7.4H9.5V11.6H7.6Z" fill="#f6d25c"/></g></svg>
<span class="t" style="top:306.93px;font-size:9.40px;left:14.70px;transform:scaleX(0.8372);transform-origin:0 50%;">Report.F367F5F8-EDAC-41B8-8670-D6C88CD22157</span>
<span class="t" style="top:306.93px;font-size:9.40px;left:381.40px;transform:scaleX(0.8593);transform-origin:0 50%;">[DIR]</span>
<span class="t" style="top:306.93px;font-size:9.40px;left:401.70px;transform:scaleX(0.8381);transform-origin:0 50%;">2018-08-29 23:10</span>
<svg class="a" style="left:2px;top:322px" width="12" height="14" viewBox="0 0 12 14" ><g transform="translate(0.50 0.11)"><defs><linearGradient id="fg" x1="0" x2="1" y1="0" y2="0"><stop offset="0" stop-color="#ffea98"/><stop offset="1" stop-color="#f8d560"/></linearGradient></defs><path d="M0.9 0H9.5V11.6H0.9Z" fill="url(#fg)"/><path d="M9.5 6.6H10.5V11.6H9.5Z" fill="#f3cd55"/><path d="M7.6 7.4H9.5V11.6H7.6Z" fill="#f6d25c"/></g></svg>
<span class="t" style="top:321.09px;font-size:9.40px;left:14.70px;transform:scaleX(0.8298);transform-origin:0 50%;">Report.FA08F001-F94E-4310-B295-37243DEACCB4</span>
<span class="t" style="top:321.09px;font-size:9.40px;left:381.40px;transform:scaleX(0.8593);transform-origin:0 50%;">[DIR]</span>
<span class="t" style="top:321.09px;font-size:9.40px;left:401.70px;transform:scaleX(0.8381);transform-origin:0 50%;">2018-08-29 23:10</span>
<div class="a" style="left:1.00px;top:334.98px;width:494.00px;height:14.16px;background:#3c3c3c;"></div>
<svg class="a" style="left:2px;top:336px" width="12" height="14" viewBox="0 0 12 14" ><g transform="translate(0.50 0.28)"><defs><linearGradient id="fg" x1="0" x2="1" y1="0" y2="0"><stop offset="0" stop-color="#ffea98"/><stop offset="1" stop-color="#f8d560"/></linearGradient></defs><path d="M0.9 0H9.5V11.6H0.9Z" fill="url(#fg)"/><path d="M9.5 6.6H10.5V11.6H9.5Z" fill="#f3cd55"/><path d="M7.6 7.4H9.5V11.6H7.6Z" fill="#f6d25c"/></g></svg>
<span class="t" style="top:335.26px;font-size:9.40px;left:14.70px;transform:scaleX(0.8320);transform-origin:0 50%;">Report.FD41EE2C-D102-4191-B4A6-AE1BD0A84CBF</span>
<span class="t" style="top:335.26px;font-size:9.40px;left:381.40px;transform:scaleX(0.8593);transform-origin:0 50%;">[DIR]</span>
<span class="t" style="top:335.26px;font-size:9.40px;left:401.70px;transform:scaleX(0.8381);transform-origin:0 50%;">2018-08-28 23:10</span>
<svg class="a" style="left:2px;top:350px" width="12" height="14" viewBox="0 0 12 14" ><g transform="translate(0.50 0.44)"><defs><linearGradient id="fg" x1="0" x2="1" y1="0" y2="0"><stop offset="0" stop-color="#ffea98"/><stop offset="1" stop-color="#f8d560"/></linearGradient></defs><path d="M0.9 0H9.5V11.6H0.9Z" fill="url(#fg)"/><path d="M9.5 6.6H10.5V11.6H9.5Z" fill="#f3cd55"/><path d="M7.6 7.4H9.5V11.6H7.6Z" fill="#f6d25c"/></g></svg>
<span class="t" style="top:349.42px;font-size:9.40px;left:14.70px;transform:scaleX(0.8404);transform-origin:0 50%;">scoped_dir8848_4411</span>
<span class="t" style="top:349.42px;font-size:9.40px;left:381.40px;transform:scaleX(0.8593);transform-origin:0 50%;">[DIR]</span>
<span class="t" style="top:349.42px;font-size:9.40px;left:401.70px;transform:scaleX(0.8381);transform-origin:0 50%;">2018-09-05 21:47</span>
<div class="a" style="left:1.00px;top:363.30px;width:494.00px;height:14.16px;background:#3c3c3c;"></div>
<svg class="a" style="left:2px;top:364px" width="12" height="14" viewBox="0 0 12 14" ><g transform="translate(0.50 0.60)"><defs><linearGradient id="fg" x1="0" x2="1" y1="0" y2="0"><stop offset="0" stop-color="#ffea98"/><stop offset="1" stop-color="#f8d560"/></linearGradient></defs><path d="M0.9 0H9.5V11.6H0.9Z" fill="url(#fg)"/><path d="M9.5 6.6H10.5V11.6H9.5Z" fill="#f3cd55"/><path d="M7.6 7.4H9.5V11.6H7.6Z" fill="#f6d25c"/></g></svg>
<span class="t" style="top:363.59px;font-size:9.40px;left:14.70px;transform:scaleX(0.8365);transform-origin:0 50%;">scoped_dir9120_29632</span>
<span class="t" style="top:363.59px;font-size:9.40px;left:381.40px;transform:scaleX(0.8593);transform-origin:0 50%;">[DIR]</span>
<span class="t" style="top:363.59px;font-size:9.40px;left:401.70px;transform:scaleX(0.8381);transform-origin:0 50%;">2018-09-04 22:41</span>
<svg class="a" style="left:2px;top:378px" width="12" height="14" viewBox="0 0 12 14" ><g transform="translate(0.50 0.77)"><defs><linearGradient id="fg" x1="0" x2="1" y1="0" y2="0"><stop offset="0" stop-color="#ffea98"/><stop offset="1" stop-color="#f8d560"/></linearGradient></defs><path d="M0.9 0H9.5V11.6H0.9Z" fill="url(#fg)"/><path d="M9.5 6.6H10.5V11.6H9.5Z" fill="#f3cd55"/><path d="M7.6 7.4H9.5V11.6H7.6Z" fill="#f6d25c"/></g></svg>
<span class="t" style="top:377.75px;font-size:9.40px;left:14.70px;transform:scaleX(0.8865);transform-origin:0 50%;">servicehub</span>
<span class="t" style="top:377.75px;font-size:9.40px;left:381.40px;transform:scaleX(0.8593);transform-origin:0 50%;">[DIR]</span>
<span class="t" style="top:377.75px;font-size:9.40px;left:401.70px;transform:scaleX(0.8460);transform-origin:0 50%;">2018-08-26 22:11</span>
<div class="a" style="left:1.00px;top:391.63px;width:494.00px;height:14.16px;background:#3c3c3c;"></div>
<svg class="a" style="left:2px;top:392px" width="12" height="14" viewBox="0 0 12 14" ><g transform="translate(0.50 0.94)"><defs><linearGradient id="fg" x1="0" x2="1" y1="0" y2="0"><stop offset="0" stop-color="#ffea98"/><stop offset="1" stop-color="#f8d560"/></linearGradient></defs><path d="M0.9 0H9.5V11.6H0.9Z" fill="url(#fg)"/><path d="M9.5 6.6H10.5V11.6H9.5Z" fill="#f3cd55"/><path d="M7.6 7.4H9.5V11.6H7.6Z" fill="#f6d25c"/></g></svg>
<span class="t" style="top:391.92px;font-size:9.40px;left:14.70px;transform:scaleX(0.8846);transform-origin:0 50%;">TeamViewer</span>
<span class="t" style="top:391.92px;font-size:9.40px;left:381.40px;transform:scaleX(0.8593);transform-origin:0 50%;">[DIR]</span>
<span class="t" style="top:391.92px;font-size:9.40px;left:401.70px;transform:scaleX(0.8381);transform-origin:0 50%;">2018-09-04 20:53</span>
<svg class="a" style="left:2px;top:407px" width="12" height="14" viewBox="0 0 12 14" ><g transform="translate(0.50 0.10)"><defs><linearGradient id="fg" x1="0" x2="1" y1="0" y2="0"><stop offset="0" stop-color="#ffea98"/><stop offset="1" stop-color="#f8d560"/></linearGradient></defs><path d="M0.9 0H9.5V11.6H0.9Z" fill="url(#fg)"/><path d="M9.5 6.6H10.5V11.6H9.5Z" fill="#f3cd55"/><path d="M7.6 7.4H9.5V11.6H7.6Z" fill="#f6d25c"/></g></svg>
<span class="t" style="top:406.08px;font-size:9.40px;left:14.70px;transform:scaleX(0.8897);transform-origin:0 50%;">tmp3w4sax</span>
<span class="t" style="top:406.08px;font-size:9.40px;left:381.40px;transform:scaleX(0.8593);transform-origin:0 50%;">[DIR]</span>
<span class="t" style="top:406.08px;font-size:9.40px;left:401.70px;transform:scaleX(0.8381);transform-origin:0 50%;">2018-09-05 09:31</span>
<div class="a" style="left:1.00px;top:419.96px;width:494.00px;height:14.16px;background:#3c3c3c;"></div>
<svg class="a" style="left:2px;top:421px" width="12" height="14" viewBox="0 0 12 14" ><g transform="translate(0.50 0.26)"><defs><linearGradient id="fg" x1="0" x2="1" y1="0" y2="0"><stop offset="0" stop-color="#ffea98"/><stop offset="1" stop-color="#f8d560"/></linearGradient></defs><path d="M0.9 0H9.5V11.6H0.9Z" fill="url(#fg)"/><path d="M9.5 6.6H10.5V11.6H9.5Z" fill="#f3cd55"/><path d="M7.6 7.4H9.5V11.6H7.6Z" fill="#f6d25c"/></g></svg>
<span class="t" style="top:420.25px;font-size:9.40px;left:14.70px;transform:scaleX(0.9643);transform-origin:0 50%;">tmpbyjorn</span>
<span class="t" style="top:420.25px;font-size:9.40px;left:381.40px;transform:scaleX(0.8593);transform-origin:0 50%;">[DIR]</span>
<span class="t" style="top:420.25px;font-size:9.40px;left:401.70px;transform:scaleX(0.8381);transform-origin:0 50%;">2018-08-29 10:48</span>
<svg class="a" style="left:2px;top:435px" width="12" height="14" viewBox="0 0 12 14" ><g transform="translate(0.50 0.43)"><defs><linearGradient id="fg" x1="0" x2="1" y1="0" y2="0"><stop offset="0" stop-color="#ffea98"/><stop offset="1" stop-color="#f8d560"/></linearGradient></defs><path d="M0.9 0H9.5V11.6H0.9Z" fill="url(#fg)"/><path d="M9.5 6.6H10.5V11.6H9.5Z" fill="#f3cd55"/><path d="M7.6 7.4H9.5V11.6H7.6Z" fill="#f6d25c"/></g></svg>
<span class="t" style="top:434.41px;font-size:9.40px;left:14.70px;transform:scaleX(0.9804);transform-origin:0 50%;">tmpoudtmg</span>
<span class="t" style="top:434.41px;font-size:9.40px;left:381.40px;transform:scaleX(0.8593);transform-origin:0 50%;">[DIR]</span>
<span class="t" style="top:434.41px;font-size:9.40px;left:401.70px;transform:scaleX(0.8381);transform-origin:0 50%;">2018-09-05 21:47</span>
<div class="a" style="left:1.00px;top:448.29px;width:494.00px;height:14.16px;background:#3c3c3c;"></div>
<svg class="a" style="left:2px;top:449px" width="12" height="14" viewBox="0 0 12 14" ><g transform="translate(0.50 0.59)"><defs><linearGradient id="fg" x1="0" x2="1" y1="0" y2="0"><stop offset="0" stop-color="#ffea98"/><stop offset="1" stop-color="#f8d560"/></linearGradient></defs><path d="M0.9 0H9.5V11.6H0.9Z" fill="url(#fg)"/><path d="M9.5 6.6H10.5V11.6H9.5Z" fill="#f3cd55"/><path d="M7.6 7.4H9.5V11.6H7.6Z" fill="#f6d25c"/></g></svg>
<span class="t" style="top:448.58px;font-size:9.40px;left:14.70px;transform:scaleX(0.9227);transform-origin:0 50%;">tmpxt39bn</span>
<span class="t" style="top:448.58px;font-size:9.40px;left:381.40px;transform:scaleX(0.8593);transform-origin:0 50%;">[DIR]</span>
<span class="t" style="top:448.58px;font-size:9.40px;left:401.70px;transform:scaleX(0.8381);transform-origin:0 50%;">2018-08-30 08:53</span>
<svg class="a" style="left:2px;top:463px" width="12" height="14" viewBox="0 0 12 14" ><g transform="translate(0.50 0.76)"><defs><linearGradient id="fg" x1="0" x2="1" y1="0" y2="0"><stop offset="0" stop-color="#ffea98"/><stop offset="1" stop-color="#f8d560"/></linearGradient></defs><path d="M0.9 0H9.5V11.6H0.9Z" fill="url(#fg)"/><path d="M9.5 6.6H10.5V11.6H9.5Z" fill="#f3cd55"/><path d="M7.6 7.4H9.5V11.6H7.6Z" fill="#f6d25c"/></g></svg>
<span class="t" style="top:462.74px;font-size:9.40px;left:14.70px;transform:scaleX(0.7417);transform-origin:0 50%;">VS</span>
<span class="t" style="top:462.74px;font-size:9.40px;left:381.40px;transform:scaleX(0.8593);transform-origin:0 50%;">[DIR]</span>
<span class="t" style="top:462.74px;font-size:9.40px;left:401.70px;transform:scaleX(0.8381);transform-origin:0 50%;">2018-08-29 19:59</span>
<div class="a" style="left:1.00px;top:476.62px;width:494.00px;height:3.27px;background:#3c3c3c;"></div>
<div class="a" style="left:2px;top:477px;width:13px;height:3px;overflow:hidden"><svg class="a" style="left:0px;top:0px" width="12" height="14" viewBox="0 0 12 14" ><g transform="translate(0.50 0.93)"><defs><linearGradient id="fg" x1="0" x2="1" y1="0" y2="0"><stop offset="0" stop-color="#ffea98"/><stop offset="1" stop-color="#f8d560"/></linearGradient></defs><path d="M0.9 0H9.5V11.6H0.9Z" fill="url(#fg)"/><path d="M9.5 6.6H10.5V11.6H9.5Z" fill="#f3cd55"/><path d="M7.6 7.4H9.5V11.6H7.6Z" fill="#f6d25c"/></g></svg></div>
<div class="a" style="left:1.00px;top:479.90px;width:506.00px;height:0.90px;background:#1c1c1c;"></div>
<div class="a" style="left:1.00px;top:249.98px;width:494.00px;height:14.16px;box-shadow:inset 0 0 0 1px #175f93;border-radius:1.5px;"></div>
<div class="a" style="left:495.00px;top:108.30px;width:12.00px;height:372.00px;background:#f0f0f0;"></div>
<div class="a" style="left:495.00px;top:120.00px;width:12.00px;height:210.00px;background:#cdcdcd;"></div>
<svg class="a" style="left:495px;top:110px" width="12" height="8" viewBox="0 0 12 8" fill="none" stroke="#454545" stroke-width="1.4"><g transform="translate(0.00 0.50)"><path d="M3.2 5.6L6 2.8L8.8 5.6"/></g></svg>
<svg class="a" style="left:495px;top:470px" width="12" height="8" viewBox="0 0 12 8" fill="none" stroke="#454545" stroke-width="1.4"><g transform="translate(0.00 0.50)"><path d="M3.2 2.4L6 5.2L8.8 2.4"/></g></svg>
<span class="t" style="top:480.00px;font-size:9.40px;left:3.00px;transform:scaleX(0.8348);transform-origin:0 50%;">Report.55B3F1CD-EA38-4397-B72C-639A306AFFAD</span>
<span class="t" style="top:480.00px;font-size:9.40px;left:397.60px;transform:scaleX(0.8593);transform-origin:0 50%;">[DIR]</span>
<span class="t" style="top:480.00px;font-size:9.40px;left:431.60px;transform:scaleX(0.8488);transform-origin:0 50%;">2018-08-30 20:59</span>
<div class="a" style="left:1.00px;top:494.00px;width:506.00px;height:0.70px;background:#333;"></div>
<div class="a" style="left:512.60px;top:78.30px;width:114.00px;height:15.00px;background:#007acc;"></div>
<span class="t" style="top:79.00px;font-size:9.40px;color:#f0f0f0;left:557.00px;transform:scaleX(0.9391);transform-origin:0 50%;">myco5</span>
<div class="a" style="left:626.60px;top:78.30px;width:112.60px;height:14.60px;background:#252526;box-shadow:inset 0 0 0 1px #3a3a3a;"></div>
<span class="t" style="top:79.00px;font-size:9.40px;color:#dcdcdc;left:676.20px;transform:scaleX(0.9645);transform-origin:0 50%;">kits</span>
<div class="a" style="left:739.20px;top:78.30px;width:112.40px;height:14.60px;background:#252526;box-shadow:inset 0 0 0 1px #3a3a3a;"></div>
<span class="t" style="top:79.00px;font-size:9.40px;color:#dcdcdc;left:786.30px;transform:scaleX(1.0090);transform-origin:0 50%;">utile</span>
<div class="a" style="left:512.00px;top:92.40px;width:505.00px;height:1.80px;background:#007acc;"></div>
<svg class="a" style="left:519px;top:97px" width="5" height="8" viewBox="0 0 5 8"><g transform="translate(0.20 0.60)"><path d="M0.3 0.6L4.4 4L0.3 7.4Z" fill="#e6e6e6"/></g></svg>
<span class="t" style="top:94.40px;font-size:9.40px;color:#dcdcdc;left:527.50px;transform:scaleX(0.7769);transform-origin:0 50%;">P:</span>
<svg class="a" style="left:540px;top:97px" width="5" height="8" viewBox="0 0 5 8"><g transform="translate(0.60 0.60)"><path d="M0.3 0.6L4.4 4L0.3 7.4Z" fill="#e6e6e6"/></g></svg>
<span class="t" style="top:94.40px;font-size:9.40px;color:#dcdcdc;left:549.00px;transform:scaleX(0.9266);transform-origin:0 50%;">mycommander</span>
<svg class="a" style="left:613px;top:97px" width="5" height="8" viewBox="0 0 5 8"><g transform="translate(0.00 0.60)"><path d="M0.3 0.6L4.4 4L0.3 7.4Z" fill="#e6e6e6"/></g></svg>
<span class="t" style="top:94.40px;font-size:9.40px;color:#dcdcdc;left:621.00px;transform:scaleX(0.9247);transform-origin:0 50%;">myco5</span>
<svg class="a" style="left:960px;top:94px" width="56" height="13" viewBox="0 0 56 13" fill="none" stroke="#dcdcdc" stroke-width="1"><g transform="translate(0.40 0.90)"><path d="M3.2 2.8L5.9 9.6"/><path d="M13.6 8.4H14.7M18.9 8.4H20" stroke-width="1.1"/><path d="M23.4 3H32.4V10.8H23.4ZM27.9 3V10.8M23.4 6.9H32.4"/><path d="M29.6 2.9L31.3 1.1L33 2.9" stroke-width="0.8"/><path d="M39.5 2.2V10.4M35.9 4.2L43.1 8.4M43.1 4.2L35.9 8.4" stroke-width="0.9"/><path d="M47.2 3H55L51.1 10Z" fill="#dcdcdc" stroke="none"/></g></svg>
<span class="t" style="top:108.70px;font-size:9.40px;color:#e2e2e2;left:514.00px;transform:scaleX(0.8933);transform-origin:0 50%;">Name</span>
<div class="a" style="left:831.00px;top:108.30px;width:1.00px;height:13.40px;background:#474747;"></div>
<div class="a" style="left:867.00px;top:108.30px;width:1.00px;height:13.40px;background:#474747;"></div>
<div class="a" style="left:909.00px;top:108.30px;width:1.00px;height:13.40px;background:#474747;"></div>
<div class="a" style="left:974.10px;top:108.30px;width:1.00px;height:13.40px;background:#474747;"></div>
<svg class="a" style="left:833px;top:113px" width="7" height="6" viewBox="0 0 7 6"><g transform="translate(0.80 0.00)"><path d="M0.2 5.2L3.1 0.2L6 5.2Z" fill="#585858"/><path d="M0.1 5.2H6.1" stroke="#6e6e6e" stroke-width="0.8"/></g></svg>
<span class="t" style="top:108.70px;font-size:9.40px;color:#e2e2e2;left:855.40px;transform:scaleX(0.7805);transform-origin:0 50%;">Ext</span>
<span class="t" style="top:108.70px;font-size:9.40px;color:#e2e2e2;left:893.70px;transform:scaleX(0.7765);transform-origin:0 50%;">Size</span>
<span class="t" style="top:108.70px;font-size:9.40px;color:#e2e2e2;left:956.00px;transform:scaleX(0.8562);transform-origin:0 50%;">Date</span>
<span class="t" style="top:108.70px;font-size:9.40px;color:#e2e2e2;left:988.70px;transform:scaleX(0.9574);transform-origin:0 50%;">Attr</span>
<div class="a" style="left:512.00px;top:121.70px;width:493.00px;height:0.90px;background:#454545;"></div>
<svg class="a" style="left:514px;top:125px" width="9" height="10" viewBox="0 0 9 10" fill="none" stroke="#5f7cc8" stroke-width="1"><g transform="translate(0.10 0.20)"><path d="M0.3 3.6L3.5 0.5L6.8 3.6M3.5 0.7V8.6H7.8"/></g></svg>
<span class="t" style="top:122.78px;font-size:9.40px;left:526.00px;transform:scaleX(0.8858);transform-origin:0 50%;">..</span>
<span class="t" style="top:122.78px;font-size:9.40px;left:891.40px;transform:scaleX(0.8593);transform-origin:0 50%;">[DIR]</span>
<div class="a" style="left:512.00px;top:136.66px;width:493.00px;height:14.16px;background:#3c3c3c;"></div>
<svg class="a" style="left:513px;top:137px" width="12" height="14" viewBox="0 0 12 14" ><g transform="translate(0.60 0.97)"><defs><linearGradient id="fg" x1="0" x2="1" y1="0" y2="0"><stop offset="0" stop-color="#ffea98"/><stop offset="1" stop-color="#f8d560"/></linearGradient></defs><path d="M0.9 0H9.5V11.6H0.9Z" fill="url(#fg)"/><path d="M9.5 6.6H10.5V11.6H9.5Z" fill="#f3cd55"/><path d="M7.6 7.4H9.5V11.6H7.6Z" fill="#f6d25c"/><circle cx="3" cy="8" r="3.5" fill="#1aa61a"/><path d="M1.3 8L2.6 9.3L4.8 6.9" stroke="#fff" stroke-width="1" fill="none"/></g></svg>
<span class="t" style="top:136.95px;font-size:9.40px;left:526.00px;transform:scaleX(0.8717);transform-origin:0 50%;">7zip</span>
<span class="t" style="top:136.95px;font-size:9.40px;left:891.40px;transform:scaleX(0.8593);transform-origin:0 50%;">[DIR]</span>
<span class="t" style="top:136.95px;font-size:9.40px;left:911.70px;transform:scaleX(0.8541);transform-origin:0 50%;">2018-03-12 11:11</span>
<svg class="a" style="left:513px;top:152px" width="12" height="14" viewBox="0 0 12 14" ><g transform="translate(0.60 0.13)"><defs><linearGradient id="fg" x1="0" x2="1" y1="0" y2="0"><stop offset="0" stop-color="#ffea98"/><stop offset="1" stop-color="#f8d560"/></linearGradient></defs><path d="M0.9 0H9.5V11.6H0.9Z" fill="url(#fg)"/><path d="M9.5 6.6H10.5V11.6H9.5Z" fill="#f3cd55"/><path d="M7.6 7.4H9.5V11.6H7.6Z" fill="#f6d25c"/><circle cx="3" cy="8" r="3.5" fill="#1aa61a"/><path d="M1.3 8L2.6 9.3L4.8 6.9" stroke="#fff" stroke-width="1" fill="none"/></g></svg>
<span class="t" style="top:151.11px;font-size:9.40px;left:526.00px;transform:scaleX(0.8858);transform-origin:0 50%;">arch</span>
<span class="t" style="top:151.11px;font-size:9.40px;left:891.40px;transform:scaleX(0.8593);transform-origin:0 50%;">[DIR]</span>
<span class="t" style="top:151.11px;font-size:9.40px;left:911.70px;transform:scaleX(0.8541);transform-origin:0 50%;">2018-03-12 11:11</span>
<div class="a" style="left:512.00px;top:165.00px;width:493.00px;height:14.16px;background:#3c3c3c;"></div>
<svg class="a" style="left:513px;top:166px" width="12" height="14" viewBox="0 0 12 14" ><g transform="translate(0.60 0.30)"><defs><linearGradient id="fg" x1="0" x2="1" y1="0" y2="0"><stop offset="0" stop-color="#ffea98"/><stop offset="1" stop-color="#f8d560"/></linearGradient></defs><path d="M0.9 0H9.5V11.6H0.9Z" fill="url(#fg)"/><path d="M9.5 6.6H10.5V11.6H9.5Z" fill="#f3cd55"/><path d="M7.6 7.4H9.5V11.6H7.6Z" fill="#f6d25c"/><circle cx="3" cy="8" r="3.5" fill="#1aa61a"/><path d="M1.3 8L2.6 9.3L4.8 6.9" stroke="#fff" stroke-width="1" fill="none"/></g></svg>
<span class="t" style="top:165.28px;font-size:9.40px;left:526.00px;transform:scaleX(0.8858);transform-origin:0 50%;">iso</span>
<span class="t" style="top:165.28px;font-size:9.40px;left:891.40px;transform:scaleX(0.8593);transform-origin:0 50%;">[DIR]</span>
<span class="t" style="top:165.28px;font-size:9.40px;left:911.70px;transform:scaleX(0.8541);transform-origin:0 50%;">2018-03-12 11:11</span>
<svg class="a" style="left:513px;top:180px" width="12" height="14" viewBox="0 0 12 14" ><g transform="translate(0.60 0.46)"><defs><linearGradient id="fg" x1="0" x2="1" y1="0" y2="0"><stop offset="0" stop-color="#ffea98"/><stop offset="1" stop-color="#f8d560"/></linearGradient></defs><path d="M0.9 0H9.5V11.6H0.9Z" fill="url(#fg)"/><path d="M9.5 6.6H10.5V11.6H9.5Z" fill="#f3cd55"/><path d="M7.6 7.4H9.5V11.6H7.6Z" fill="#f6d25c"/><circle cx="3" cy="8" r="3.5" fill="#1aa61a"/><path d="M1.3 8L2.6 9.3L4.8 6.9" stroke="#fff" stroke-width="1" fill="none"/></g></svg>
<span class="t" style="top:179.44px;font-size:9.40px;left:526.00px;transform:scaleX(0.8656);transform-origin:0 50%;">lz4</span>
<span class="t" style="top:179.44px;font-size:9.40px;left:891.40px;transform:scaleX(0.8593);transform-origin:0 50%;">[DIR]</span>
<span class="t" style="top:179.44px;font-size:9.40px;left:911.70px;transform:scaleX(0.8541);transform-origin:0 50%;">2018-03-12 11:11</span>
<div class="a" style="left:512.00px;top:193.32px;width:493.00px;height:14.16px;background:#3c3c3c;"></div>
<svg class="a" style="left:513px;top:194px" width="12" height="14" viewBox="0 0 12 14" ><g transform="translate(0.60 0.62)"><defs><linearGradient id="fg" x1="0" x2="1" y1="0" y2="0"><stop offset="0" stop-color="#ffea98"/><stop offset="1" stop-color="#f8d560"/></linearGradient></defs><path d="M0.9 0H9.5V11.6H0.9Z" fill="url(#fg)"/><path d="M9.5 6.6H10.5V11.6H9.5Z" fill="#f3cd55"/><path d="M7.6 7.4H9.5V11.6H7.6Z" fill="#f6d25c"/><circle cx="3" cy="8" r="3.5" fill="#1aa61a"/><path d="M1.3 8L2.6 9.3L4.8 6.9" stroke="#fff" stroke-width="1" fill="none"/></g></svg>
<span class="t" style="top:193.61px;font-size:9.40px;left:526.00px;transform:scaleX(0.8858);transform-origin:0 50%;">lzma</span>
<span class="t" style="top:193.61px;font-size:9.40px;left:891.40px;transform:scaleX(0.8593);transform-origin:0 50%;">[DIR]</span>
<span class="t" style="top:193.61px;font-size:9.40px;left:911.70px;transform:scaleX(0.8541);transform-origin:0 50%;">2018-03-12 11:11</span>
<svg class="a" style="left:513px;top:208px" width="12" height="14" viewBox="0 0 12 14" ><g transform="translate(0.60 0.79)"><defs><linearGradient id="fg" x1="0" x2="1" y1="0" y2="0"><stop offset="0" stop-color="#ffea98"/><stop offset="1" stop-color="#f8d560"/></linearGradient></defs><path d="M0.9 0H9.5V11.6H0.9Z" fill="url(#fg)"/><path d="M9.5 6.6H10.5V11.6H9.5Z" fill="#f3cd55"/><path d="M7.6 7.4H9.5V11.6H7.6Z" fill="#f6d25c"/><circle cx="3" cy="8" r="3.5" fill="#1aa61a"/><path d="M1.3 8L2.6 9.3L4.8 6.9" stroke="#fff" stroke-width="1" fill="none"/></g></svg>
<span class="t" style="top:207.77px;font-size:9.40px;left:526.00px;transform:scaleX(0.8858);transform-origin:0 50%;">res</span>
<span class="t" style="top:207.77px;font-size:9.40px;left:891.40px;transform:scaleX(0.8593);transform-origin:0 50%;">[DIR]</span>
<span class="t" style="top:207.77px;font-size:9.40px;left:911.70px;transform:scaleX(0.8381);transform-origin:0 50%;">2018-09-04 15:47</span>
<div class="a" style="left:512.00px;top:221.66px;width:493.00px;height:14.16px;background:#3c3c3c;"></div>
<svg class="a" style="left:513px;top:222px" width="12" height="14" viewBox="0 0 12 14" ><g transform="translate(0.60 0.96)"><defs><linearGradient id="fg" x1="0" x2="1" y1="0" y2="0"><stop offset="0" stop-color="#ffea98"/><stop offset="1" stop-color="#f8d560"/></linearGradient></defs><path d="M0.9 0H9.5V11.6H0.9Z" fill="url(#fg)"/><path d="M9.5 6.6H10.5V11.6H9.5Z" fill="#f3cd55"/><path d="M7.6 7.4H9.5V11.6H7.6Z" fill="#f6d25c"/><circle cx="3" cy="8" r="3.5" fill="#1aa61a"/><path d="M1.3 8L2.6 9.3L4.8 6.9" stroke="#fff" stroke-width="1" fill="none"/></g></svg>
<span class="t" style="top:221.94px;font-size:9.40px;left:526.00px;transform:scaleX(0.8858);transform-origin:0 50%;">unrar</span>
<span class="t" style="top:221.94px;font-size:9.40px;left:891.40px;transform:scaleX(0.8593);transform-origin:0 50%;">[DIR]</span>
<span class="t" style="top:221.94px;font-size:9.40px;left:911.70px;transform:scaleX(0.8541);transform-origin:0 50%;">2018-03-12 11:11</span>
<svg class="a" style="left:513px;top:237px" width="12" height="14" viewBox="0 0 12 14" ><g transform="translate(0.60 0.12)"><defs><linearGradient id="fg" x1="0" x2="1" y1="0" y2="0"><stop offset="0" stop-color="#ffea98"/><stop offset="1" stop-color="#f8d560"/></linearGradient></defs><path d="M0.9 0H9.5V11.6H0.9Z" fill="url(#fg)"/><path d="M9.5 6.6H10.5V11.6H9.5Z" fill="#f3cd55"/><path d="M7.6 7.4H9.5V11.6H7.6Z" fill="#f6d25c"/><circle cx="3" cy="8" r="3.5" fill="#1aa61a"/><path d="M1.3 8L2.6 9.3L4.8 6.9" stroke="#fff" stroke-width="1" fill="none"/></g></svg>
<span class="t" style="top:236.10px;font-size:9.40px;left:526.00px;transform:scaleX(0.8858);transform-origin:0 50%;">xxtea</span>
<span class="t" style="top:236.10px;font-size:9.40px;left:891.40px;transform:scaleX(0.8593);transform-origin:0 50%;">[DIR]</span>
<span class="t" style="top:236.10px;font-size:9.40px;left:911.70px;transform:scaleX(0.8541);transform-origin:0 50%;">2018-03-12 11:11</span>
<div class="a" style="left:512.00px;top:249.98px;width:493.00px;height:14.16px;background:#3c3c3c;"></div>
<svg class="a" style="left:513px;top:251px" width="12" height="14" viewBox="0 0 12 14" ><g transform="translate(0.60 0.28)"><defs><linearGradient id="fg" x1="0" x2="1" y1="0" y2="0"><stop offset="0" stop-color="#ffea98"/><stop offset="1" stop-color="#f8d560"/></linearGradient></defs><path d="M0.9 0H9.5V11.6H0.9Z" fill="url(#fg)"/><path d="M9.5 6.6H10.5V11.6H9.5Z" fill="#f3cd55"/><path d="M7.6 7.4H9.5V11.6H7.6Z" fill="#f6d25c"/><circle cx="3" cy="8" r="3.5" fill="#1aa61a"/><path d="M1.3 8L2.6 9.3L4.8 6.9" stroke="#fff" stroke-width="1" fill="none"/></g></svg>
<span class="t" style="top:250.27px;font-size:9.40px;left:526.00px;transform:scaleX(0.8858);transform-origin:0 50%;">zlib</span>
<span class="t" style="top:250.27px;font-size:9.40px;left:891.40px;transform:scaleX(0.8593);transform-origin:0 50%;">[DIR]</span>
<span class="t" style="top:250.27px;font-size:9.40px;left:911.70px;transform:scaleX(0.8541);transform-origin:0 50%;">2018-03-12 11:11</span>
<svg class="a" style="left:513px;top:265px" width="12" height="14" viewBox="0 0 12 14" ><g transform="translate(0.60 0.45)"><defs><linearGradient id="fg" x1="0" x2="1" y1="0" y2="0"><stop offset="0" stop-color="#ffea98"/><stop offset="1" stop-color="#f8d560"/></linearGradient></defs><path d="M0.9 0H9.5V11.6H0.9Z" fill="url(#fg)"/><path d="M9.5 6.6H10.5V11.6H9.5Z" fill="#f3cd55"/><path d="M7.6 7.4H9.5V11.6H7.6Z" fill="#f6d25c"/><circle cx="3" cy="8" r="3.5" fill="#1aa61a"/><path d="M1.3 8L2.6 9.3L4.8 6.9" stroke="#fff" stroke-width="1" fill="none"/></g></svg>
<span class="t" style="top:264.43px;font-size:9.40px;left:526.00px;transform:scaleX(0.8858);transform-origin:0 50%;">zstd</span>
<span class="t" style="top:264.43px;font-size:9.40px;left:891.40px;transform:scaleX(0.8593);transform-origin:0 50%;">[DIR]</span>
<span class="t" style="top:264.43px;font-size:9.40px;left:911.70px;transform:scaleX(0.8541);transform-origin:0 50%;">2018-03-12 11:11</span>
<div class="a" style="left:512.00px;top:278.31px;width:493.00px;height:14.16px;background:#3c3c3c;"></div>
<svg class="a" style="left:513px;top:279px" width="12" height="14" viewBox="0 0 12 14" ><g transform="translate(0.60 0.62)"><defs><linearGradient id="fg" x1="0" x2="1" y1="0" y2="0"><stop offset="0" stop-color="#ffea98"/><stop offset="1" stop-color="#f8d560"/></linearGradient></defs><path d="M0.9 0H9.5V11.6H0.9Z" fill="url(#fg)"/><path d="M9.5 6.6H10.5V11.6H9.5Z" fill="#f3cd55"/><path d="M7.6 7.4H9.5V11.6H7.6Z" fill="#f6d25c"/><circle cx="3" cy="8" r="3.5" fill="#1aa61a"/><path d="M1.3 8L2.6 9.3L4.8 6.9" stroke="#fff" stroke-width="1" fill="none"/></g></svg>
<span class="t" style="top:278.60px;font-size:9.40px;left:526.00px;transform:scaleX(0.8858);transform-origin:0 50%;">lib</span>
<span class="t" style="top:278.60px;font-size:9.40px;left:891.40px;transform:scaleX(0.8593);transform-origin:0 50%;">[DIR]</span>
<span class="t" style="top:278.60px;font-size:9.40px;left:911.70px;transform:scaleX(0.8541);transform-origin:0 50%;">2018-03-12 11:11</span>
<svg class="a" style="left:513px;top:293px" width="12" height="14" viewBox="0 0 12 14" ><g transform="translate(0.60 0.78)"><defs><linearGradient id="fg" x1="0" x2="1" y1="0" y2="0"><stop offset="0" stop-color="#ffea98"/><stop offset="1" stop-color="#f8d560"/></linearGradient></defs><path d="M0.9 0H9.5V11.6H0.9Z" fill="url(#fg)"/><path d="M9.5 6.6H10.5V11.6H9.5Z" fill="#f3cd55"/><path d="M7.6 7.4H9.5V11.6H7.6Z" fill="#f6d25c"/><circle cx="3" cy="8" r="3.5" fill="#1aa61a"/><path d="M1.3 8L2.6 9.3L4.8 6.9" stroke="#fff" stroke-width="1" fill="none"/></g></svg>
<span class="t" style="top:292.76px;font-size:9.40px;left:526.00px;transform:scaleX(0.8537);transform-origin:0 50%;">x64</span>
<span class="t" style="top:292.76px;font-size:9.40px;left:891.40px;transform:scaleX(0.8593);transform-origin:0 50%;">[DIR]</span>
<span class="t" style="top:292.76px;font-size:9.40px;left:911.70px;transform:scaleX(0.8381);transform-origin:0 50%;">2018-08-21 18:56</span>
<div class="a" style="left:512.00px;top:306.64px;width:493.00px;height:14.16px;background:#3c3c3c;"></div>
<svg class="a" style="left:513px;top:309px" width="12" height="9" viewBox="0 0 12 9" fill="none" stroke-linecap="round"><g transform="translate(0.80 0.75)"><path d="M1.5 3.1H4.7M3.1 1.5V4.7M6.1 4.9H9.3M7.7 3.3V6.5" stroke="#efe2f1" stroke-width="2.5"/><path d="M1.1 3.1H5.1M3.1 1.1V5.1M5.7 4.9H9.7M7.7 2.9V6.9" stroke="#a63fb8" stroke-width="1.15" stroke-linecap="butt"/></g></svg>
<span class="t" style="top:306.93px;font-size:9.40px;left:526.00px;transform:scaleX(0.8751);transform-origin:0 50%;">ClassDiagram</span>
<span class="t" style="top:306.93px;font-size:9.40px;left:859.21px;transform:scaleX(0.8858);transform-origin:0 50%;">cd</span>
<span class="t" style="top:306.93px;font-size:9.40px;left:882.59px;transform:scaleX(0.8135);transform-origin:0 50%;">3,81 KB</span>
<span class="t" style="top:306.93px;font-size:9.40px;left:911.70px;transform:scaleX(0.8541);transform-origin:0 50%;">2018-03-12 11:11</span>
<span class="t" style="top:306.93px;font-size:9.40px;left:998.00px;transform:scaleX(0.8393);transform-origin:0 50%;">A</span>
<svg class="a" style="left:513px;top:323px" width="12" height="9" viewBox="0 0 12 9" fill="none" stroke-linecap="round"><g transform="translate(0.80 0.91)"><path d="M1.5 3.1H4.7M3.1 1.5V4.7M6.1 4.9H9.3M7.7 3.3V6.5" stroke="#efe2f1" stroke-width="2.5"/><path d="M1.1 3.1H5.1M3.1 1.1V5.1M5.7 4.9H9.7M7.7 2.9V6.9" stroke="#a63fb8" stroke-width="1.15" stroke-linecap="butt"/></g></svg>
<span class="t" style="top:321.09px;font-size:9.40px;left:526.00px;transform:scaleX(0.8681);transform-origin:0 50%;">MyAbout</span>
<span class="t" style="top:321.09px;font-size:9.40px;left:854.58px;transform:scaleX(0.8858);transform-origin:0 50%;">cpp</span>
<span class="t" style="top:321.09px;font-size:9.40px;left:882.59px;transform:scaleX(0.8135);transform-origin:0 50%;">17,5 KB</span>
<span class="t" style="top:321.09px;font-size:9.40px;left:911.70px;transform:scaleX(0.8541);transform-origin:0 50%;">2018-03-12 11:11</span>
<span class="t" style="top:321.09px;font-size:9.40px;left:998.00px;transform:scaleX(0.8393);transform-origin:0 50%;">A</span>
<div class="a" style="left:512.00px;top:334.98px;width:493.00px;height:14.16px;background:#3c3c3c;"></div>
<svg class="a" style="left:513px;top:338px" width="12" height="9" viewBox="0 0 12 9" fill="none" stroke-linecap="round"><g transform="translate(0.80 0.08)"><path d="M1.5 3.1H4.7M3.1 1.5V4.7M6.1 4.9H9.3M7.7 3.3V6.5" stroke="#efe2f1" stroke-width="2.5"/><path d="M1.1 3.1H5.1M3.1 1.1V5.1M5.7 4.9H9.7M7.7 2.9V6.9" stroke="#a63fb8" stroke-width="1.15" stroke-linecap="butt"/></g></svg>
<span class="t" style="top:335.26px;font-size:9.40px;left:526.00px;transform:scaleX(0.9055);transform-origin:0 50%;">MyArchiveHelper</span>
<span class="t" style="top:335.26px;font-size:9.40px;left:854.58px;transform:scaleX(0.8858);transform-origin:0 50%;">cpp</span>
<span class="t" style="top:335.26px;font-size:9.40px;left:882.59px;transform:scaleX(0.8135);transform-origin:0 50%;">36,1 KB</span>
<span class="t" style="top:335.26px;font-size:9.40px;left:911.70px;transform:scaleX(0.8381);transform-origin:0 50%;">2018-05-09 21:59</span>
<span class="t" style="top:335.26px;font-size:9.40px;left:998.00px;transform:scaleX(0.8393);transform-origin:0 50%;">A</span>
<svg class="a" style="left:513px;top:352px" width="12" height="9" viewBox="0 0 12 9" fill="none" stroke-linecap="round"><g transform="translate(0.80 0.24)"><path d="M1.5 3.1H4.7M3.1 1.5V4.7M6.1 4.9H9.3M7.7 3.3V6.5" stroke="#efe2f1" stroke-width="2.5"/><path d="M1.1 3.1H5.1M3.1 1.1V5.1M5.7 4.9H9.7M7.7 2.9V6.9" stroke="#a63fb8" stroke-width="1.15" stroke-linecap="butt"/></g></svg>
<span class="t" style="top:349.42px;font-size:9.40px;left:526.00px;transform:scaleX(0.9255);transform-origin:0 50%;">MyArchiveModel</span>
<span class="t" style="top:349.42px;font-size:9.40px;left:854.58px;transform:scaleX(0.8858);transform-origin:0 50%;">cpp</span>
<span class="t" style="top:349.42px;font-size:9.40px;left:882.59px;transform:scaleX(0.8135);transform-origin:0 50%;">10,0 KB</span>
<span class="t" style="top:349.42px;font-size:9.40px;left:911.70px;transform:scaleX(0.8541);transform-origin:0 50%;">2018-03-12 11:11</span>
<span class="t" style="top:349.42px;font-size:9.40px;left:998.00px;transform:scaleX(0.8393);transform-origin:0 50%;">A</span>
<div class="a" style="left:512.00px;top:363.30px;width:493.00px;height:14.16px;background:#3c3c3c;"></div>
<svg class="a" style="left:513px;top:366px" width="12" height="9" viewBox="0 0 12 9" fill="none" stroke-linecap="round"><g transform="translate(0.80 0.40)"><path d="M1.5 3.1H4.7M3.1 1.5V4.7M6.1 4.9H9.3M7.7 3.3V6.5" stroke="#efe2f1" stroke-width="2.5"/><path d="M1.1 3.1H5.1M3.1 1.1V5.1M5.7 4.9H9.7M7.7 2.9V6.9" stroke="#a63fb8" stroke-width="1.15" stroke-linecap="butt"/></g></svg>
<span class="t" style="top:363.59px;font-size:9.40px;left:526.00px;transform:scaleX(0.8988);transform-origin:0 50%;">MyAskDialog</span>
<span class="t" style="top:363.59px;font-size:9.40px;left:854.58px;transform:scaleX(0.8858);transform-origin:0 50%;">cpp</span>
<span class="t" style="top:363.59px;font-size:9.40px;left:875.66px;transform:scaleX(0.8375);transform-origin:0 50%;">539 bytes</span>
<span class="t" style="top:363.59px;font-size:9.40px;left:911.70px;transform:scaleX(0.8541);transform-origin:0 50%;">2018-03-12 11:11</span>
<span class="t" style="top:363.59px;font-size:9.40px;left:998.00px;transform:scaleX(0.8393);transform-origin:0 50%;">A</span>
<svg class="a" style="left:513px;top:380px" width="12" height="9" viewBox="0 0 12 9" fill="none" stroke-linecap="round"><g transform="translate(0.80 0.57)"><path d="M1.5 3.1H4.7M3.1 1.5V4.7M6.1 4.9H9.3M7.7 3.3V6.5" stroke="#efe2f1" stroke-width="2.5"/><path d="M1.1 3.1H5.1M3.1 1.1V5.1M5.7 4.9H9.7M7.7 2.9V6.9" stroke="#a63fb8" stroke-width="1.15" stroke-linecap="butt"/></g></svg>
<span class="t" style="top:377.75px;font-size:9.40px;left:526.00px;transform:scaleX(0.8712);transform-origin:0 50%;">MyBaseDialog</span>
<span class="t" style="top:377.75px;font-size:9.40px;left:854.58px;transform:scaleX(0.8858);transform-origin:0 50%;">cpp</span>
<span class="t" style="top:377.75px;font-size:9.40px;left:882.59px;transform:scaleX(0.8135);transform-origin:0 50%;">4,44 KB</span>
<span class="t" style="top:377.75px;font-size:9.40px;left:911.70px;transform:scaleX(0.8541);transform-origin:0 50%;">2018-03-12 11:11</span>
<span class="t" style="top:377.75px;font-size:9.40px;left:998.00px;transform:scaleX(0.8393);transform-origin:0 50%;">A</span>
<div class="a" style="left:512.00px;top:391.63px;width:493.00px;height:14.16px;background:#3c3c3c;"></div>
<svg class="a" style="left:513px;top:394px" width="12" height="9" viewBox="0 0 12 9" fill="none" stroke-linecap="round"><g transform="translate(0.80 0.74)"><path d="M1.5 3.1H4.7M3.1 1.5V4.7M6.1 4.9H9.3M7.7 3.3V6.5" stroke="#efe2f1" stroke-width="2.5"/><path d="M1.1 3.1H5.1M3.1 1.1V5.1M5.7 4.9H9.7M7.7 2.9V6.9" stroke="#a63fb8" stroke-width="1.15" stroke-linecap="butt"/></g></svg>
<span class="t" style="top:391.92px;font-size:9.40px;left:526.00px;transform:scaleX(0.9188);transform-origin:0 50%;">MyBranchModel</span>
<span class="t" style="top:391.92px;font-size:9.40px;left:854.58px;transform:scaleX(0.8858);transform-origin:0 50%;">cpp</span>
<span class="t" style="top:391.92px;font-size:9.40px;left:882.59px;transform:scaleX(0.8135);transform-origin:0 50%;">9,68 KB</span>
<span class="t" style="top:391.92px;font-size:9.40px;left:911.70px;transform:scaleX(0.8541);transform-origin:0 50%;">2018-03-12 11:11</span>
<span class="t" style="top:391.92px;font-size:9.40px;left:998.00px;transform:scaleX(0.8393);transform-origin:0 50%;">A</span>
<svg class="a" style="left:513px;top:408px" width="12" height="9" viewBox="0 0 12 9" fill="none" stroke-linecap="round"><g transform="translate(0.80 0.90)"><path d="M1.5 3.1H4.7M3.1 1.5V4.7M6.1 4.9H9.3M7.7 3.3V6.5" stroke="#efe2f1" stroke-width="2.5"/><path d="M1.1 3.1H5.1M3.1 1.1V5.1M5.7 4.9H9.7M7.7 2.9V6.9" stroke="#a63fb8" stroke-width="1.15" stroke-linecap="butt"/></g></svg>
<span class="t" style="top:406.08px;font-size:9.40px;left:526.00px;transform:scaleX(0.9129);transform-origin:0 50%;">MyButtonBar</span>
<span class="t" style="top:406.08px;font-size:9.40px;left:854.58px;transform:scaleX(0.8858);transform-origin:0 50%;">cpp</span>
<span class="t" style="top:406.08px;font-size:9.40px;left:882.59px;transform:scaleX(0.8135);transform-origin:0 50%;">6,64 KB</span>
<span class="t" style="top:406.08px;font-size:9.40px;left:911.70px;transform:scaleX(0.8541);transform-origin:0 50%;">2018-03-12 11:11</span>
<span class="t" style="top:406.08px;font-size:9.40px;left:998.00px;transform:scaleX(0.8393);transform-origin:0 50%;">A</span>
<div class="a" style="left:512.00px;top:419.96px;width:493.00px;height:14.16px;background:#3c3c3c;"></div>
<svg class="a" style="left:513px;top:423px" width="12" height="9" viewBox="0 0 12 9" fill="none" stroke-linecap="round"><g transform="translate(0.80 0.06)"><path d="M1.5 3.1H4.7M3.1 1.5V4.7M6.1 4.9H9.3M7.7 3.3V6.5" stroke="#efe2f1" stroke-width="2.5"/><path d="M1.1 3.1H5.1M3.1 1.1V5.1M5.7 4.9H9.7M7.7 2.9V6.9" stroke="#a63fb8" stroke-width="1.15" stroke-linecap="butt"/></g></svg>
<span class="t" style="top:420.25px;font-size:9.40px;left:526.00px;transform:scaleX(0.8993);transform-origin:0 50%;">MyChecksum</span>
<span class="t" style="top:420.25px;font-size:9.40px;left:854.58px;transform:scaleX(0.8858);transform-origin:0 50%;">cpp</span>
<span class="t" style="top:420.25px;font-size:9.40px;left:882.59px;transform:scaleX(0.8135);transform-origin:0 50%;">5,32 KB</span>
<span class="t" style="top:420.25px;font-size:9.40px;left:911.70px;transform:scaleX(0.8541);transform-origin:0 50%;">2018-03-12 11:11</span>
<span class="t" style="top:420.25px;font-size:9.40px;left:998.00px;transform:scaleX(0.8393);transform-origin:0 50%;">A</span>
<svg class="a" style="left:513px;top:437px" width="12" height="9" viewBox="0 0 12 9" fill="none" stroke-linecap="round"><g transform="translate(0.80 0.23)"><path d="M1.5 3.1H4.7M3.1 1.5V4.7M6.1 4.9H9.3M7.7 3.3V6.5" stroke="#efe2f1" stroke-width="2.5"/><path d="M1.1 3.1H5.1M3.1 1.1V5.1M5.7 4.9H9.7M7.7 2.9V6.9" stroke="#a63fb8" stroke-width="1.15" stroke-linecap="butt"/></g></svg>
<span class="t" style="top:434.41px;font-size:9.40px;left:526.00px;transform:scaleX(0.8997);transform-origin:0 50%;">MyChecksumDialog</span>
<span class="t" style="top:434.41px;font-size:9.40px;left:854.58px;transform:scaleX(0.8858);transform-origin:0 50%;">cpp</span>
<span class="t" style="top:434.41px;font-size:9.40px;left:882.59px;transform:scaleX(0.8135);transform-origin:0 50%;">10,3 KB</span>
<span class="t" style="top:434.41px;font-size:9.40px;left:911.70px;transform:scaleX(0.8541);transform-origin:0 50%;">2018-03-12 11:11</span>
<span class="t" style="top:434.41px;font-size:9.40px;left:998.00px;transform:scaleX(0.8393);transform-origin:0 50%;">A</span>
<div class="a" style="left:512.00px;top:448.29px;width:493.00px;height:14.16px;background:#3c3c3c;"></div>
<svg class="a" style="left:513px;top:451px" width="12" height="9" viewBox="0 0 12 9" fill="none" stroke-linecap="round"><g transform="translate(0.80 0.39)"><path d="M1.5 3.1H4.7M3.1 1.5V4.7M6.1 4.9H9.3M7.7 3.3V6.5" stroke="#efe2f1" stroke-width="2.5"/><path d="M1.1 3.1H5.1M3.1 1.1V5.1M5.7 4.9H9.7M7.7 2.9V6.9" stroke="#a63fb8" stroke-width="1.15" stroke-linecap="butt"/></g></svg>
<span class="t" style="top:448.58px;font-size:9.40px;left:526.00px;transform:scaleX(0.9306);transform-origin:0 50%;">myco</span>
<span class="t" style="top:448.58px;font-size:9.40px;left:854.58px;transform:scaleX(0.8858);transform-origin:0 50%;">cpp</span>
<span class="t" style="top:448.58px;font-size:9.40px;left:875.66px;transform:scaleX(0.8375);transform-origin:0 50%;">373 bytes</span>
<span class="t" style="top:448.58px;font-size:9.40px;left:911.70px;transform:scaleX(0.8541);transform-origin:0 50%;">2018-03-12 11:11</span>
<span class="t" style="top:448.58px;font-size:9.40px;left:998.00px;transform:scaleX(0.8393);transform-origin:0 50%;">A</span>
<svg class="a" style="left:513px;top:465px" width="12" height="9" viewBox="0 0 12 9" fill="none" stroke-linecap="round"><g transform="translate(0.80 0.56)"><path d="M1.5 3.1H4.7M3.1 1.5V4.7M6.1 4.9H9.3M7.7 3.3V6.5" stroke="#efe2f1" stroke-width="2.5"/><path d="M1.1 3.1H5.1M3.1 1.1V5.1M5.7 4.9H9.7M7.7 2.9V6.9" stroke="#a63fb8" stroke-width="1.15" stroke-linecap="butt"/></g></svg>
<span class="t" style="top:462.74px;font-size:9.40px;left:526.00px;transform:scaleX(0.9161);transform-origin:0 50%;">MyCommandBar</span>
<span class="t" style="top:462.74px;font-size:9.40px;left:854.58px;transform:scaleX(0.8858);transform-origin:0 50%;">cpp</span>
<span class="t" style="top:462.74px;font-size:9.40px;left:882.59px;transform:scaleX(0.8135);transform-origin:0 50%;">8,40 KB</span>
<span class="t" style="top:462.74px;font-size:9.40px;left:911.70px;transform:scaleX(0.8541);transform-origin:0 50%;">2018-03-12 11:11</span>
<span class="t" style="top:462.74px;font-size:9.40px;left:998.00px;transform:scaleX(0.8393);transform-origin:0 50%;">A</span>
<div class="a" style="left:512.00px;top:476.62px;width:493.00px;height:3.27px;background:#3c3c3c;"></div>
<div class="a" style="left:513px;top:479px;width:13px;height:1px;overflow:hidden"><svg class="a" style="left:0px;top:0px" width="12" height="9" viewBox="0 0 12 9" fill="none" stroke-linecap="round"><g transform="translate(0.80 0.73)"><path d="M1.5 3.1H4.7M3.1 1.5V4.7M6.1 4.9H9.3M7.7 3.3V6.5" stroke="#efe2f1" stroke-width="2.5"/><path d="M1.1 3.1H5.1M3.1 1.1V5.1M5.7 4.9H9.7M7.7 2.9V6.9" stroke="#a63fb8" stroke-width="1.15" stroke-linecap="butt"/></g></svg></div>
<div class="a" style="left:512.00px;top:479.90px;width:505.00px;height:0.90px;background:#1c1c1c;"></div>
<div class="a" style="left:512.00px;top:122.50px;width:493.00px;height:14.16px;box-shadow:inset 0 0 0 1px #175f93;border-radius:1.5px;"></div>
<div class="a" style="left:1005.00px;top:108.30px;width:12.00px;height:372.00px;background:#f0f0f0;"></div>
<div class="a" style="left:1005.00px;top:120.00px;width:12.00px;height:40.00px;background:#cdcdcd;"></div>
<svg class="a" style="left:1005px;top:110px" width="12" height="8" viewBox="0 0 12 8" fill="none" stroke="#454545" stroke-width="1.4"><g transform="translate(0.00 0.50)"><path d="M3.2 5.6L6 2.8L8.8 5.6"/></g></svg>
<svg class="a" style="left:1005px;top:470px" width="12" height="8" viewBox="0 0 12 8" fill="none" stroke="#454545" stroke-width="1.4"><g transform="translate(0.00 0.50)"><path d="M3.2 2.4L6 5.2L8.8 2.4"/></g></svg>
<span class="t" style="top:480.00px;font-size:9.40px;left:514.00px;transform:scaleX(0.8858);transform-origin:0 50%;">..</span>
<span class="t" style="top:480.00px;font-size:9.40px;left:907.80px;transform:scaleX(0.8593);transform-origin:0 50%;">[DIR]</span>
<div class="a" style="left:512.00px;top:494.00px;width:505.00px;height:0.70px;background:#333;"></div>
<span class="t" style="top:496.90px;font-size:9.40px;left:248.00px;transform:scaleX(0.9103);transform-origin:0 50%;">C:\Users\sergy\AppData\Local\Temp</span>
<div class="a" style="left:390.80px;top:497.80px;width:622.40px;height:13.90px;background:#232324;box-shadow:inset 0 0 0 1.2px #e6e6e6;"></div>
<span class="t" style="top:497.20px;font-size:9.40px;color:#5c5c5c;left:394.50px;transform:scaleX(0.8975);transform-origin:0 50%;">«enter command»</span>
<div class="a" style="left:1000.20px;top:498.00px;width:12.80px;height:13.20px;background:#ffffff;"></div>
<svg class="a" style="left:1001px;top:501px" width="10" height="7" viewBox="0 0 10 7" fill="none" stroke="#555" stroke-width="1"><g transform="translate(0.80 0.40)"><path d="M2.4 2L5 4.6L7.6 2"/></g></svg>
<span class="t" style="top:513.80px;font-size:9.40px;left:38.90px;transform:scaleX(0.8082);transform-origin:0 50%;">F1 Help</span>
<span class="t" style="top:513.80px;font-size:9.40px;left:132.80px;transform:scaleX(0.8471);transform-origin:0 50%;">F2 Rename</span>
<div class="a" style="left:102.10px;top:513.60px;width:0.90px;height:14.00px;background:#383838;"></div>
<span class="t" style="top:513.80px;font-size:9.40px;left:241.10px;transform:scaleX(0.8465);transform-origin:0 50%;">F3 View</span>
<div class="a" style="left:203.43px;top:513.60px;width:0.90px;height:14.00px;background:#383838;"></div>
<span class="t" style="top:513.80px;font-size:9.40px;left:344.10px;transform:scaleX(0.8529);transform-origin:0 50%;">F4 Edit</span>
<div class="a" style="left:304.76px;top:513.60px;width:0.90px;height:14.00px;background:#383838;"></div>
<span class="t" style="top:513.80px;font-size:9.40px;left:443.00px;transform:scaleX(0.8557);transform-origin:0 50%;">F5 Copy</span>
<div class="a" style="left:406.09px;top:513.60px;width:0.90px;height:14.00px;background:#383838;"></div>
<span class="t" style="top:513.80px;font-size:9.40px;left:543.60px;transform:scaleX(0.8751);transform-origin:0 50%;">F6 Move</span>
<div class="a" style="left:507.42px;top:513.60px;width:0.90px;height:14.00px;background:#383838;"></div>
<span class="t" style="top:513.80px;font-size:9.40px;left:647.40px;transform:scaleX(0.8522);transform-origin:0 50%;">F7 New</span>
<div class="a" style="left:608.75px;top:513.60px;width:0.90px;height:14.00px;background:#383838;"></div>
<span class="t" style="top:513.80px;font-size:9.40px;left:744.80px;transform:scaleX(0.8441);transform-origin:0 50%;">F8 Delete</span>
<div class="a" style="left:710.08px;top:513.60px;width:0.90px;height:14.00px;background:#383838;"></div>
<span class="t" style="top:513.80px;font-size:9.40px;left:841.90px;transform:scaleX(0.8948);transform-origin:0 50%;">F9 Network</span>
<div class="a" style="left:811.41px;top:513.60px;width:0.90px;height:14.00px;background:#383838;"></div>
<span class="t" style="top:513.80px;font-size:9.40px;left:951.20px;transform:scaleX(0.8005);transform-origin:0 50%;">F10 Exit</span>
<div class="a" style="left:912.74px;top:513.60px;width:0.90px;height:14.00px;background:#383838;"></div>
<div class="a" style="left:0.00px;top:529.70px;width:1020.00px;height:2.30px;background:#0c0c0c;"></div>
<div class="a" style="left:1017.30px;top:36.80px;width:2.70px;height:493.00px;background:#1d1d1d;"></div>
<div class="a" style="left:1018.20px;top:1.30px;width:1.80px;height:36.00px;background:#1d1d1d;"></div>
<div class="a" style="left:0.00px;top:36.80px;width:0.90px;height:493.00px;background:#1d1d1d;"></div>
<div class="a" style="left:348.00px;top:190.20px;width:321.80px;height:149.40px;background:#696969;box-shadow:inset 0 0 0 1px #1c7ed0,0 1px 9px 1px rgba(0,0,0,0.45);"></div>
<div class="a" style="left:348.00px;top:190.20px;width:321.80px;height:22.00px;background:#0063b1;"></div>
<span class="t" style="top:194.80px;font-size:9.40px;color:#ffffff;left:354.60px;transform:scaleX(0.8657);transform-origin:0 50%;">Encode</span>
<svg class="a" style="left:654px;top:197px" width="9" height="9" viewBox="0 0 9 9" fill="none" stroke="#fff" stroke-width="1"><g transform="translate(0.00 0.00)"><path d="M1 1L8 8M8 1L1 8"/></g></svg>
<span class="t" style="top:218.30px;font-size:9.40px;color:#cfcfcf;left:356.00px;transform:scaleX(0.8157);transform-origin:0 50%;">Encode the 1 selected files to:</span>
<div class="a" style="left:356.80px;top:237.00px;width:286.00px;height:13.00px;background:#262626;box-shadow:inset 0 0 0 1px #d4d4d4;"></div>
<span class="t" style="top:236.20px;font-size:9.40px;color:#d8d8d8;left:360.20px;transform:scaleX(0.8258);transform-origin:0 50%;">P:\mycommander\myco5\</span>
<div class="a" style="left:647.00px;top:236.60px;width:14.00px;height:13.20px;background:#cccccc;"></div>
<svg class="a" style="left:651px;top:240px" width="5" height="6" viewBox="0 0 5 6"><g transform="translate(0.50 0.60)"><path d="M0.5 0.8L4 3L0.5 5.2Z" fill="#aaa"/></g></svg>
<div class="a" style="left:356.40px;top:258.90px;width:304.60px;height:0.90px;background:#e8e8e8;"></div>
<span class="t" style="top:271.00px;font-size:9.40px;color:#cfcfcf;left:356.00px;transform:scaleX(0.7655);transform-origin:0 50%;">Mode:</span>
<span class="t" style="top:290.00px;font-size:9.40px;color:#cfcfcf;left:356.00px;transform:scaleX(0.7976);transform-origin:0 50%;">Password:</span>
<div class="a" style="left:410.00px;top:290.40px;width:89.80px;height:12.80px;background:#262626;box-shadow:inset 0 0 0 1px #d4d4d4;"></div>
<span class="t" style="top:315.40px;font-size:9.40px;color:#2283e6;left:356.00px;transform:scaleX(0.8201);transform-origin:0 50%;text-decoration:underline;">more help online</span>
<div class="a" style="left:410.00px;top:270.30px;width:58.40px;height:14.20px;background:#cce4f7;box-shadow:inset 0 0 0 1px #0078d7;"></div>
<span class="t" style="top:270.50px;font-size:9.40px;color:#1a1a1a;left:414.00px;transform:scaleX(0.7654);transform-origin:0 50%;">AES  256</span>
<svg class="a" style="left:457px;top:274px" width="9" height="6" viewBox="0 0 9 6" fill="none" stroke="#444" stroke-width="0.9"><g transform="translate(0.50 0.60)"><path d="M1.4 1.2L4.5 4.2L7.6 1.2"/></g></svg>
<div class="a" style="left:409.80px;top:284.50px;width:59.00px;height:56.80px;background:#ffffff;box-shadow:inset 0 0 0 0.9px #555;"></div>
<div class="a" style="left:410.70px;top:285.60px;width:57.20px;height:8.80px;background:#0078d7;"></div>
<span class="t" style="top:283.00px;font-size:9.40px;color:#ffffff;left:413.70px;transform:scaleX(0.7654);transform-origin:0 50%;">AES  256</span>
<span class="t" style="top:293.00px;font-size:9.40px;color:#1a1a1a;left:413.70px;transform:scaleX(0.7756);transform-origin:0 50%;">RC4  256</span>
<span class="t" style="top:302.00px;font-size:9.40px;color:#1a1a1a;left:413.70px;transform:scaleX(0.7506);transform-origin:0 50%;">DES  256</span>
<span class="t" style="top:311.10px;font-size:9.40px;color:#1a1a1a;left:413.70px;transform:scaleX(0.7654);transform-origin:0 50%;">3DES 256</span>
<span class="t" style="top:320.30px;font-size:9.40px;color:#1a1a1a;left:413.70px;transform:scaleX(0.7138);transform-origin:0 50%;">XXTEA</span>
<span class="t" style="top:329.20px;font-size:9.40px;color:#1a1a1a;left:413.70px;transform:scaleX(0.7340);transform-origin:0 50%;">BASE 64</span>
<div class="a" style="left:598.30px;top:295.00px;width:62.20px;height:14.30px;background:#e1e1e1;box-shadow:inset 0 0 0 1px #adadad;"></div>
<span class="t" style="top:295.30px;font-size:9.40px;color:#1a1a1a;left:618.00px;transform:scaleX(0.7724);transform-origin:0 50%;">Cancel</span>
<div class="a" style="left:598.30px;top:314.70px;width:62.20px;height:14.20px;background:#e1e1e1;box-shadow:inset 0 0 0 1.6px #0078d7;"></div>
<span class="t" style="top:315.10px;font-size:9.40px;color:#1a1a1a;left:624.20px;transform:scaleX(0.7510);transform-origin:0 50%;">OK</span>
</body></html>
